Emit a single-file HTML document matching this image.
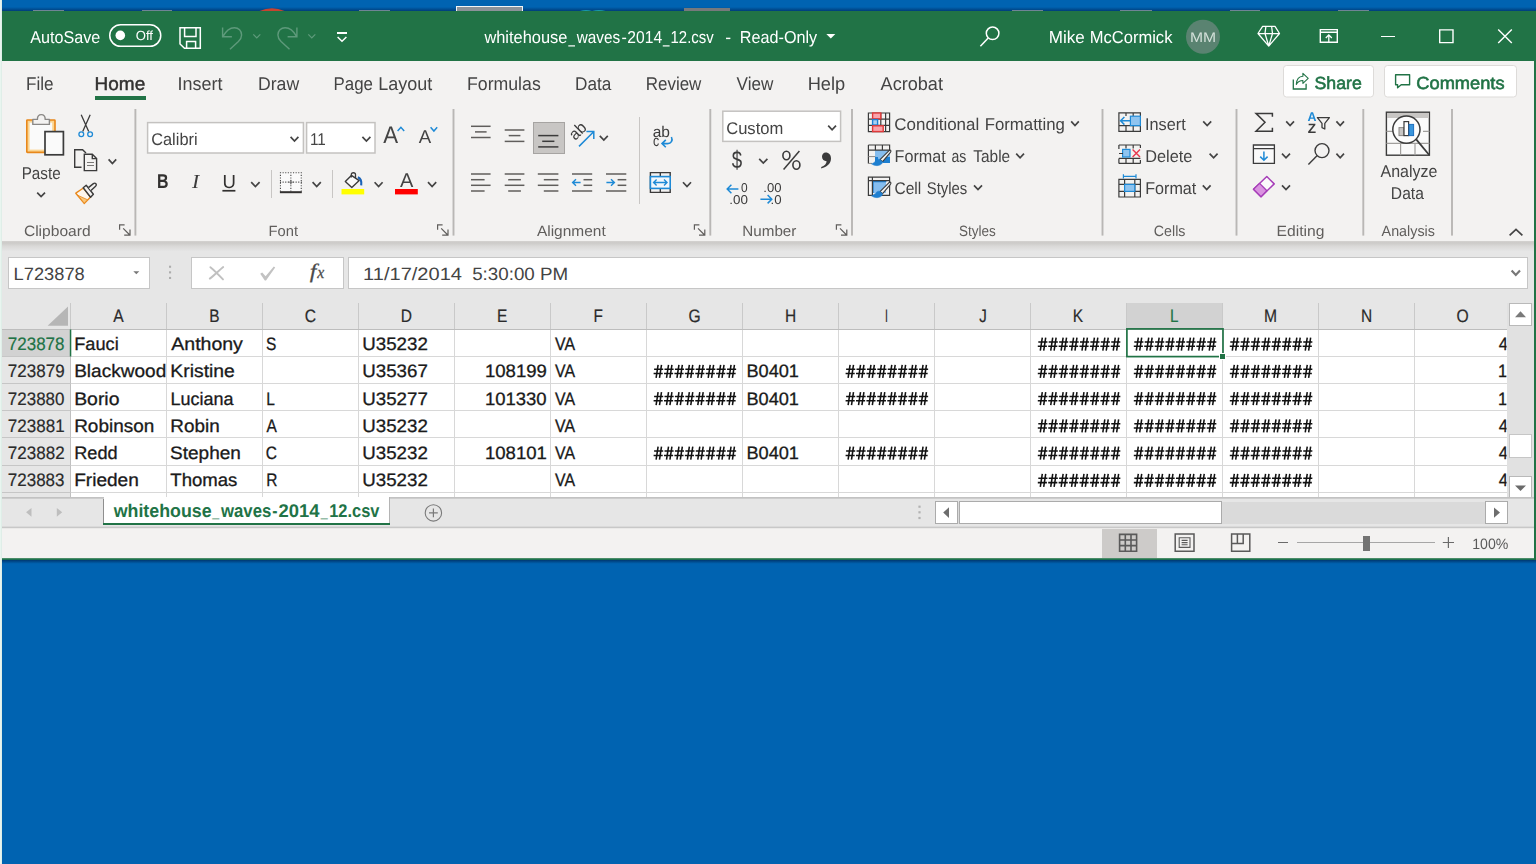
<!DOCTYPE html>
<html><head><meta charset="utf-8"><title>Excel</title>
<style>html,body{margin:0;padding:0;background:#0063b1;overflow:hidden}svg{display:block}text{white-space:pre}</style>
</head><body>
<svg width="1536" height="864" viewBox="0 0 1536 864" font-family="Liberation Sans" text-rendering="geometricPrecision">
<rect x="0" y="0" width="1536" height="864" fill="#0063b1" shape-rendering="crispEdges"/>
<defs><filter id="nf" filterUnits="userSpaceOnUse" x="0" y="0" width="1536" height="864"><feOffset dx="0" dy="0"/></filter><linearGradient id="shT" x1="0" y1="0" x2="0" y2="1"><stop offset="0" stop-color="#0063b1"/><stop offset="1" stop-color="#003d7a"/></linearGradient><linearGradient id="shB" x1="0" y1="0" x2="0" y2="1"><stop offset="0" stop-color="#00366e"/><stop offset="1" stop-color="#0063b1"/></linearGradient><linearGradient id="rsh" x1="0" y1="0" x2="0" y2="1"><stop offset="0" stop-color="#d4d2d0"/><stop offset="0.18" stop-color="#cccac8"/><stop offset="0.5" stop-color="#dad9d8"/><stop offset="1" stop-color="#e6e6e6"/></linearGradient></defs>
<rect x="2" y="7" width="1534" height="4" fill="url(#shT)" shape-rendering="crispEdges"/>
<rect x="2" y="559.8" width="1534" height="4" fill="url(#shB)" shape-rendering="crispEdges"/>
<rect x="32.5" y="10" width="31" height="1" fill="#6f8496" shape-rendering="crispEdges"/>
<rect x="141.5" y="10" width="30.5" height="1" fill="#6f8496" shape-rendering="crispEdges"/>
<rect x="359" y="10" width="31" height="1" fill="#6f8496" shape-rendering="crispEdges"/>
<rect x="1012" y="10" width="31" height="1" fill="#6f8496" shape-rendering="crispEdges"/>
<rect x="1120" y="10" width="31.5" height="1" fill="#6f8496" shape-rendering="crispEdges"/>
<rect x="1229.5" y="10" width="30.5" height="1" fill="#6f8496" shape-rendering="crispEdges"/>
<rect x="1338" y="10" width="31" height="1" fill="#6f8496" shape-rendering="crispEdges"/>
<path d="M259.5 11 Q272 5.6 284.5 11Z" stroke="none" fill="#c8432f" stroke-width="1"/>
<rect x="456" y="5.7" width="67" height="5.3" fill="#8b9299" shape-rendering="crispEdges"/>
<rect x="456" y="5.7" width="67" height="1" fill="#f2f4f6" shape-rendering="crispEdges"/>
<rect x="456" y="5.7" width="1" height="5.3" fill="#f2f4f6" shape-rendering="crispEdges"/>
<rect x="522" y="5.7" width="1" height="5.3" fill="#f2f4f6" shape-rendering="crispEdges"/>
<rect x="683.5" y="7.6" width="46" height="3.4" fill="#77797c" shape-rendering="crispEdges"/>
<path d="M580 11 Q586 9 592 11 Q599 9 605.5 11Z" stroke="none" fill="#1a9aa8" stroke-width="1"/>
<rect x="2" y="11" width="1533" height="548" fill="#f3f2f1" shape-rendering="crispEdges"/>
<rect x="2" y="11" width="1534" height="49.5" fill="#217346" shape-rendering="crispEdges"/>
<rect x="1534" y="11" width="2" height="549" fill="#217346" shape-rendering="crispEdges"/>
<rect x="2" y="558.2" width="1534" height="1.7" fill="#217346"/>
<rect x="2" y="241" width="1532" height="287" fill="#e6e6e6" shape-rendering="crispEdges"/>
<rect x="2" y="241" width="1532" height="10.5" fill="url(#rsh)" shape-rendering="crispEdges"/>
<rect x="2" y="528" width="1532" height="30" fill="#f3f2f1" shape-rendering="crispEdges"/>
<line x1="2" y1="527.5" x2="1534" y2="527.5" stroke="#c6c6c6" stroke-width="1" shape-rendering="crispEdges"/>
<rect x="0" y="0" width="1" height="864" fill="#e8f5ef" shape-rendering="crispEdges"/>
<rect x="1" y="0" width="1" height="864" fill="#dfeee8" shape-rendering="crispEdges"/>
<g filter="url(#nf)">
<text x="30.30" y="42.60" font-family="Liberation Sans" font-size="17.2" fill="#ffffff" textLength="70.07" lengthAdjust="spacingAndGlyphs">AutoSave</text>
<rect x="109.75" y="24.75" width="51" height="21.5" rx="10.75" fill="none" stroke="#fff" stroke-width="1.5"/>
<circle cx="120.3" cy="35.4" r="4.8" fill="#fff"/>
<text x="135.71" y="40.30" font-family="Liberation Sans" font-size="13.2" fill="#ffffff" textLength="17.23" lengthAdjust="spacingAndGlyphs">Off</text>
<path d="M180 27.7H200.3V48.3H184.5L180 44Z" stroke="#ffffff" fill="none" stroke-width="1.5"/>
<path d="M184.6 27.7V36.6H196V27.7" stroke="#ffffff" fill="none" stroke-width="1.5"/>
<path d="M186.6 48.3V41.6H195.6V48.3" stroke="#ffffff" fill="none" stroke-width="1.5"/>
<path d="M222.6 27.4V36.7H231.9 M223 36.4C226 30.8 230 27.7 234.4 27.7C238.6 27.7 241.6 31 241.6 35C241.6 38 240.4 39.6 238.4 41.6L230 49.3" stroke="#5e9a7b" fill="none" stroke-width="1.4"/>
<path d="M253.3 34.4L256.8 38L260.3 34.4" stroke="#5e9a7b" fill="none" stroke-width="1.2"/>
<path d="M296.9 27.4V36.7H287.6 M296.5 36.4C293.5 30.8 289.5 27.7 285.1 27.7C280.9 27.7 277.9 31 277.9 35C277.9 38 279.1 39.6 281.1 41.6L289.5 49.3" stroke="#5e9a7b" fill="none" stroke-width="1.4"/>
<path d="M308.3 34.4L311.8 38L315.3 34.4" stroke="#5e9a7b" fill="none" stroke-width="1.2"/>
<line x1="337" y1="33" x2="347" y2="33" stroke="#ffffff" stroke-width="1.5" shape-rendering="crispEdges"/>
<path d="M337.6 37L342.0 41.2L346.4 37" stroke="#ffffff" fill="none" stroke-width="1.5"/>
<text x="484.38" y="43.20" font-family="Liberation Sans" font-size="17.3" fill="#ffffff" textLength="82.96" lengthAdjust="spacingAndGlyphs">whitehouse</text>
<text x="568.53" y="43.20" font-family="Liberation Sans" font-size="17.3" fill="#ffffff" textLength="6.41" lengthAdjust="spacingAndGlyphs">_</text>
<text x="576.78" y="43.20" font-family="Liberation Sans" font-size="17.3" fill="#ffffff" textLength="43.45" lengthAdjust="spacingAndGlyphs">waves</text>
<text x="621.46" y="43.20" font-family="Liberation Sans" font-size="17.3" fill="#ffffff" textLength="5.33" lengthAdjust="spacingAndGlyphs">-</text>
<text x="627.32" y="43.20" font-family="Liberation Sans" font-size="17.3" fill="#ffffff" textLength="34.77" lengthAdjust="spacingAndGlyphs">2014</text>
<text x="662.93" y="43.20" font-family="Liberation Sans" font-size="17.3" fill="#ffffff" textLength="6.41" lengthAdjust="spacingAndGlyphs">_</text>
<text x="670.58" y="43.20" font-family="Liberation Sans" font-size="17.3" fill="#ffffff" textLength="43.12" lengthAdjust="spacingAndGlyphs">12.csv</text>
<text x="725.20" y="43.20" font-family="Liberation Sans" font-size="17.3" fill="#ffffff" textLength="5.86" lengthAdjust="spacingAndGlyphs">-</text>
<text x="739.80" y="43.20" font-family="Liberation Sans" font-size="17.3" fill="#ffffff" textLength="77.39" lengthAdjust="spacingAndGlyphs">Read-Only</text>
<path d="M826.3 34H835.3L830.8 38.6Z" stroke="none" fill="#ffffff" stroke-width="1"/>
<circle cx="992.6" cy="33.3" r="6.3" fill="none" stroke="#fff" stroke-width="1.5"/>
<line x1="988.2" y1="38" x2="980.4" y2="46.3" stroke="#ffffff" stroke-width="1.5"/>
<text x="1048.74" y="43.20" font-family="Liberation Sans" font-size="17.3" fill="#ffffff" textLength="35.97" lengthAdjust="spacingAndGlyphs">Mike</text>
<text x="1089.78" y="43.20" font-family="Liberation Sans" font-size="17.3" fill="#ffffff" textLength="82.63" lengthAdjust="spacingAndGlyphs">McCormick</text>
<circle cx="1203" cy="36.8" r="17" fill="#5a8371"/>
<text x="1189.94" y="42.30" font-family="Liberation Sans" font-size="14" fill="#d3e0d9" textLength="26.15" lengthAdjust="spacingAndGlyphs">MM</text>
<path d="M1262.6 26.4H1275L1279.5 33.5L1268.75 46.1L1258 33.5Z M1258 33.5H1279.5 M1265.9 26.4L1265 33.5L1268.75 46 M1271.6 26.4L1272.5 33.5L1268.75 46" stroke="#ffffff" fill="none" stroke-width="1.25" stroke-linejoin="round"/>
<path d="M1320.3 29.6H1337.3V42.3H1320.3Z M1320.3 32.2H1337.3" stroke="#ffffff" fill="none" stroke-width="1.4"/>
<path d="M1328.8 42V35 M1325.8 38L1328.8 34.9L1331.8 38" stroke="#ffffff" fill="none" stroke-width="1.3"/>
<line x1="1380.7" y1="36.5" x2="1395" y2="36.5" stroke="#ffffff" stroke-width="1.4" shape-rendering="crispEdges"/>
<path d="M1439.7 29.9H1453V42.6H1439.7Z" stroke="#ffffff" fill="none" stroke-width="1.4"/>
<path d="M1498.2 29.5L1511.8 43 M1511.8 29.5L1498.2 43" stroke="#ffffff" fill="none" stroke-width="1.4"/>
<text x="26.03" y="90.00" font-family="Liberation Sans" font-size="18.5" fill="#444444" textLength="27.58" lengthAdjust="spacingAndGlyphs">File</text>
<text x="94.58" y="90.00" font-family="Liberation Sans" font-size="18.5" fill="#323130" textLength="50.63" lengthAdjust="spacingAndGlyphs" stroke="#323130" stroke-width="0.45">Home</text>
<rect x="94.5" y="96" width="51.5" height="3.5" fill="#217346" shape-rendering="crispEdges"/>
<text x="177.48" y="90.00" font-family="Liberation Sans" font-size="18.5" fill="#444444" textLength="44.94" lengthAdjust="spacingAndGlyphs">Insert</text>
<text x="257.99" y="90.00" font-family="Liberation Sans" font-size="18.5" fill="#444444" textLength="41.19" lengthAdjust="spacingAndGlyphs">Draw</text>
<text x="333.55" y="90.00" font-family="Liberation Sans" font-size="18.5" fill="#444444" textLength="39.44" lengthAdjust="spacingAndGlyphs">Page</text>
<text x="378.16" y="90.00" font-family="Liberation Sans" font-size="18.5" fill="#444444" textLength="53.98" lengthAdjust="spacingAndGlyphs">Layout</text>
<text x="466.98" y="90.00" font-family="Liberation Sans" font-size="18.5" fill="#444444" textLength="73.79" lengthAdjust="spacingAndGlyphs">Formulas</text>
<text x="575.02" y="90.00" font-family="Liberation Sans" font-size="18.5" fill="#444444" textLength="36.33" lengthAdjust="spacingAndGlyphs">Data</text>
<text x="645.74" y="90.00" font-family="Liberation Sans" font-size="18.5" fill="#444444" textLength="55.64" lengthAdjust="spacingAndGlyphs">Review</text>
<text x="736.60" y="90.00" font-family="Liberation Sans" font-size="18.5" fill="#444444" textLength="36.79" lengthAdjust="spacingAndGlyphs">View</text>
<text x="807.64" y="90.00" font-family="Liberation Sans" font-size="18.5" fill="#444444" textLength="37.52" lengthAdjust="spacingAndGlyphs">Help</text>
<text x="880.60" y="90.00" font-family="Liberation Sans" font-size="18.5" fill="#444444" textLength="62.33" lengthAdjust="spacingAndGlyphs">Acrobat</text>
<rect x="1283.5" y="65.5" width="90" height="31.5" rx="3" fill="#fff" stroke="#dddbd9"/>
<rect x="1384.5" y="65.5" width="132" height="31.5" rx="3" fill="#fff" stroke="#dddbd9"/>
<path d="M1293.3 79.4V89H1306.1V83.8" stroke="#217346" fill="none" stroke-width="1.3"/>
<path d="M1296.3 84.4C1296.6 79.6 1299 76.5 1302.9 76.3V73.3L1308.2 78.3L1302.9 83.3V80.5C1300 80.5 1297.8 81.7 1296.3 84.4Z" stroke="#217346" fill="none" stroke-width="1.1" stroke-linejoin="round"/>
<text x="1314.50" y="89.00" font-family="Liberation Sans" font-size="17.5" fill="#217346" textLength="47.27" lengthAdjust="spacingAndGlyphs" stroke="#217346" stroke-width="0.6">Share</text>
<path d="M1395.6 74.8H1409.6V84.8H1401.2L1397.6 87.8V84.8H1395.6Z" stroke="#217346" fill="none" stroke-width="1.4" stroke-linejoin="round"/>
<text x="1416.39" y="89.00" font-family="Liberation Sans" font-size="17.5" fill="#217346" textLength="88.14" lengthAdjust="spacingAndGlyphs" stroke="#217346" stroke-width="0.6">Comments</text>
<rect x="134.45000000000002" y="109" width="1.9" height="126.6" fill="#b9b7b5"/>
<rect x="452.55" y="109" width="1.9" height="126.6" fill="#b9b7b5"/>
<rect x="709.3499999999999" y="109" width="1.9" height="126.6" fill="#b9b7b5"/>
<rect x="851.05" y="109" width="1.9" height="126.6" fill="#b9b7b5"/>
<rect x="1101.55" y="109" width="1.9" height="126.6" fill="#b9b7b5"/>
<rect x="1235.55" y="109" width="1.9" height="126.6" fill="#b9b7b5"/>
<rect x="1362.35" y="109" width="1.9" height="126.6" fill="#b9b7b5"/>
<rect x="1451.05" y="109" width="1.9" height="126.6" fill="#b9b7b5"/>
<rect x="26.8" y="120" width="28.2" height="32.4" rx="0.6" fill="#fbd591" stroke="#e8871a" stroke-width="1.6"/>
<rect x="29.6" y="122.6" width="22.6" height="27" fill="#fafafa"/>
<path d="M32.8 124.4V119.4H37.4C37.4 113 45.2 113 45.2 119.4H49.4V124.4Z" stroke="#8a8886" fill="#f3f2f1" stroke-width="1.4" stroke-linejoin="round"/>
<rect x="45" y="131.6" width="18.4" height="23.2" fill="#fafafa" stroke="#3b3b3b" stroke-width="1.7"/>
<text x="21.68" y="179.00" font-family="Liberation Sans" font-size="17" fill="#444444" textLength="39.07" lengthAdjust="spacingAndGlyphs">Paste</text>
<path d="M37.2 192.6L41.1 196.6L45 192.6" stroke="#444444" fill="none" stroke-width="1.7"/>
<path d="M81.2 114.8L88.7 131.5 M90.2 114.8L82.7 131.5" stroke="#3b3b3b" fill="none" stroke-width="1.3"/>
<circle cx="81.3" cy="134.2" r="2.4" fill="none" stroke="#1e8ad6" stroke-width="1.3"/><circle cx="90.1" cy="134.2" r="2.4" fill="none" stroke="#1e8ad6" stroke-width="1.3"/>
<path d="M81.5 167.3H74.7V149.7H82.6L86 153" stroke="#3b3b3b" fill="none" stroke-width="1.4"/>
<path d="M84.3 154.3H92.3L96.6 158.6V170.6H84.3Z M92.3 154.3V158.6H96.6" stroke="#3b3b3b" fill="#f3f2f1" stroke-width="1.4"/>
<line x1="87" y1="162.5" x2="94" y2="162.5" stroke="#797775" stroke-width="1" shape-rendering="crispEdges"/>
<line x1="87" y1="165.5" x2="94" y2="165.5" stroke="#797775" stroke-width="1" shape-rendering="crispEdges"/>
<path d="M108.6 159.4L112.4 163.6L116.2 159.4" stroke="#444444" fill="none" stroke-width="1.7"/>
<path d="M75.8 193.2L83.4 188L90.6 197L84.2 203.4Z" stroke="#e8871a" fill="#fdf6ec" stroke-width="1.4" stroke-linejoin="round"/>
<path d="M78 195.4L87.6 199.8L84.2 203.2Z" stroke="#e8871a" fill="#f9c77a" stroke-width="0.8" stroke-linejoin="round"/>
<path d="M83.2 187.8L86.2 185.2L93.4 194.2L90.6 197.2Z" stroke="#3b3b3b" fill="#f3f2f1" stroke-width="1.4" stroke-linejoin="round"/>
<path d="M88.4 187.6L93.4 183.6C95.4 182.2 97.4 184.6 95.6 186.2L91 190.6" stroke="#3b3b3b" fill="#f3f2f1" stroke-width="1.4" stroke-linejoin="round"/>
<text x="23.92" y="236.20" font-family="Liberation Sans" font-size="14.9" fill="#605e5c" textLength="66.72" lengthAdjust="spacingAndGlyphs">Clipboard</text>
<path d="M119.6 229.8V224.8H124.6" stroke="#605e5c" fill="none" stroke-width="1.2"/>
<path d="M123.19999999999999 228.4L129.79999999999998 235.0 M130.0 229.4V235.20000000000002H124.19999999999999" stroke="#605e5c" fill="none" stroke-width="1.2"/>
<rect x="147.6" y="122.6" width="155.8" height="30.4" fill="#fff" stroke="#c4c2c0" stroke-width="1.5"/>
<text x="151.18" y="144.70" font-family="Liberation Sans" font-size="17" fill="#444444" textLength="46.45" lengthAdjust="spacingAndGlyphs">Calibri</text>
<path d="M290.6 136.8L294.5 141L298.4 136.8" stroke="#444444" fill="none" stroke-width="1.7"/>
<rect x="306.6" y="122.6" width="68.4" height="30.4" fill="#fff" stroke="#c4c2c0" stroke-width="1.5"/>
<text x="309.95" y="144.70" font-family="Liberation Sans" font-size="17" fill="#444444" textLength="15.88" lengthAdjust="spacingAndGlyphs">11</text>
<path d="M362.4 136.8L366.4 141L370.4 136.8" stroke="#444444" fill="none" stroke-width="1.7"/>
<text x="383.20" y="143.40" font-family="Liberation Sans" font-size="24" fill="#444444" textLength="14.85" lengthAdjust="spacingAndGlyphs">A</text>
<path d="M397.6 131L400.9 127.3L404.2 131" stroke="#1e8ad6" fill="none" stroke-width="1.5"/>
<text x="418.80" y="143.40" font-family="Liberation Sans" font-size="18.6" fill="#444444" textLength="12.44" lengthAdjust="spacingAndGlyphs">A</text>
<path d="M430.6 127.3L433.9 131L437.2 127.3" stroke="#1e8ad6" fill="none" stroke-width="1.5"/>
<text x="157.06" y="188.40" font-family="Liberation Sans" font-size="20" fill="#323130" textLength="11.51" lengthAdjust="spacingAndGlyphs" font-weight="bold">B</text>
<text x="192.01" y="188.40" font-family="Liberation Serif" font-size="20" fill="#3b3b3b" textLength="7.19" lengthAdjust="spacingAndGlyphs" font-style="italic">I</text>
<text x="222.51" y="188.20" font-family="Liberation Sans" font-size="19" fill="#323130" textLength="13.43" lengthAdjust="spacingAndGlyphs">U</text>
<rect x="222.4" y="189.9" width="13" height="1.7" fill="#323130"/>
<path d="M251.2 182.2L255.4 186.6L259.6 182.2" stroke="#444444" fill="none" stroke-width="1.7"/>
<rect x="270.75" y="170" width="1" height="27.5" fill="#c8c6c4" shape-rendering="crispEdges"/>
<rect x="332.25" y="170" width="1" height="27.5" fill="#c8c6c4" shape-rendering="crispEdges"/>
<rect x="280.4" y="172.8" width="20.8" height="18.6" fill="#fafafa"/>
<path d="M280.00 172.2h1.1v1.1h-1.1zM280.00 181.6h1.1v1.1h-1.1zM279.9 172.20h1.1v1.1h-1.1zM290.3 172.20h1.1v1.1h-1.1zM300.7 172.20h1.1v1.1h-1.1zM282.60 172.2h1.1v1.1h-1.1zM282.60 181.6h1.1v1.1h-1.1zM279.9 174.80h1.1v1.1h-1.1zM290.3 174.80h1.1v1.1h-1.1zM300.7 174.80h1.1v1.1h-1.1zM285.20 172.2h1.1v1.1h-1.1zM285.20 181.6h1.1v1.1h-1.1zM279.9 177.40h1.1v1.1h-1.1zM290.3 177.40h1.1v1.1h-1.1zM300.7 177.40h1.1v1.1h-1.1zM287.80 172.2h1.1v1.1h-1.1zM287.80 181.6h1.1v1.1h-1.1zM279.9 180.00h1.1v1.1h-1.1zM290.3 180.00h1.1v1.1h-1.1zM300.7 180.00h1.1v1.1h-1.1zM290.40 172.2h1.1v1.1h-1.1zM290.40 181.6h1.1v1.1h-1.1zM279.9 182.60h1.1v1.1h-1.1zM290.3 182.60h1.1v1.1h-1.1zM300.7 182.60h1.1v1.1h-1.1zM293.00 172.2h1.1v1.1h-1.1zM293.00 181.6h1.1v1.1h-1.1zM279.9 185.20h1.1v1.1h-1.1zM290.3 185.20h1.1v1.1h-1.1zM300.7 185.20h1.1v1.1h-1.1zM295.60 172.2h1.1v1.1h-1.1zM295.60 181.6h1.1v1.1h-1.1zM279.9 187.80h1.1v1.1h-1.1zM290.3 187.80h1.1v1.1h-1.1zM300.7 187.80h1.1v1.1h-1.1zM298.20 172.2h1.1v1.1h-1.1zM298.20 181.6h1.1v1.1h-1.1zM279.9 190.40h1.1v1.1h-1.1zM290.3 190.40h1.1v1.1h-1.1zM300.7 190.40h1.1v1.1h-1.1zM300.80 172.2h1.1v1.1h-1.1zM300.80 181.6h1.1v1.1h-1.1z" stroke="none" fill="#4a4a4a" stroke-width="1"/>
<path d="M288.4 182.15H293.2 M290.85 179.8V184.6" stroke="#6a6a6a" fill="none" stroke-width="0.9"/>
<rect x="279.9" y="191.2" width="21.9" height="2" fill="#323130"/>
<path d="M312.6 182.2L316.70000000000005 186.6L320.8 182.2" stroke="#444444" fill="none" stroke-width="1.7"/>
<path d="M351.4 175.4L359.2 180.6L351.8 187.4L345.3 181.6Z" stroke="#3b3b3b" fill="#fafafa" stroke-width="1.4" stroke-linejoin="round"/>
<path d="M351.3 177.6V174.6C351.3 172.1 355.5 172.1 355.5 174.6V178" stroke="#3b3b3b" fill="none" stroke-width="1.3"/>
<path d="M357.9 177.3C360.7 178.4 361.7 181.4 361.2 185.3" stroke="#1a63b8" fill="none" stroke-width="2.1"/>
<rect x="341.5" y="189" width="22.7" height="5.4" fill="#ffff00"/>
<path d="M374.6 182.2L378.6 186.6L382.6 182.2" stroke="#444444" fill="none" stroke-width="1.7"/>
<text x="400.10" y="187.20" font-family="Liberation Sans" font-size="20" fill="#444444" textLength="13.34" lengthAdjust="spacingAndGlyphs">A</text>
<rect x="395" y="189" width="22.8" height="5.4" fill="#ff0000"/>
<path d="M428 182.2L432.1 186.6L436.2 182.2" stroke="#444444" fill="none" stroke-width="1.7"/>
<text x="268.62" y="236.20" font-family="Liberation Sans" font-size="14.9" fill="#605e5c" textLength="29.49" lengthAdjust="spacingAndGlyphs">Font</text>
<path d="M437.6 229.8V224.8H442.6" stroke="#605e5c" fill="none" stroke-width="1.2"/>
<path d="M441.20000000000005 228.4L447.8 235.0 M448.0 229.4V235.20000000000002H442.20000000000005" stroke="#605e5c" fill="none" stroke-width="1.2"/>
<line x1="471" y1="126.3" x2="490.6" y2="126.3" stroke="#605e5c" stroke-width="1.5"/>
<line x1="475" y1="131.9" x2="486.6" y2="131.9" stroke="#605e5c" stroke-width="1.5"/>
<line x1="471" y1="137.5" x2="490.6" y2="137.5" stroke="#605e5c" stroke-width="1.5"/>
<line x1="504.7" y1="130" x2="524.4" y2="130" stroke="#605e5c" stroke-width="1.5"/>
<line x1="508.7" y1="135.6" x2="520.4" y2="135.6" stroke="#605e5c" stroke-width="1.5"/>
<line x1="504.7" y1="141.4" x2="524.4" y2="141.4" stroke="#605e5c" stroke-width="1.5"/>
<rect x="533" y="122" width="31.4" height="31.2" fill="#c8c6c4" stroke="#a6a4a2" stroke-width="1" shape-rendering="crispEdges"/>
<line x1="538.2" y1="135.6" x2="558.4" y2="135.6" stroke="#3b3b3b" stroke-width="1.5"/>
<line x1="542.2" y1="141.3" x2="554.4" y2="141.3" stroke="#3b3b3b" stroke-width="1.5"/>
<line x1="538.2" y1="146.9" x2="558.4" y2="146.9" stroke="#3b3b3b" stroke-width="1.5"/>
<g transform="translate(575.2,141) rotate(-45)"><text x="0" y="0" font-size="16.5" fill="#3b3b3b" textLength="17.5" lengthAdjust="spacingAndGlyphs">ab</text></g>
<path d="M579 146.4L593.4 132 M586.4 131.6H593.8V139" stroke="#1e8ad6" fill="none" stroke-width="1.5"/>
<path d="M599.8 135.8L603.8 140L607.8 135.8" stroke="#444444" fill="none" stroke-width="1.7"/>
<rect x="638.9" y="117" width="1" height="86.5" fill="#c8c6c4" shape-rendering="crispEdges"/>
<text x="652.68" y="136.50" font-family="Liberation Sans" font-size="15.5" fill="#3b3b3b" textLength="17.28" lengthAdjust="spacingAndGlyphs">ab</text>
<text x="653.00" y="145.80" font-family="Liberation Sans" font-size="15.5" fill="#3b3b3b" textLength="6.21" lengthAdjust="spacingAndGlyphs">c</text>
<path d="M671.4 137C673.2 140.6 671 143.6 667.6 143.6H662.2 M665.8 139.9L662 143.6L665.8 147.3" stroke="#1e8ad6" fill="none" stroke-width="1.6"/>
<line x1="471" y1="174" x2="490.6" y2="174" stroke="#605e5c" stroke-width="1.5"/>
<line x1="504.7" y1="174" x2="524.4" y2="174" stroke="#605e5c" stroke-width="1.5"/>
<line x1="537.8" y1="174" x2="558.4" y2="174" stroke="#605e5c" stroke-width="1.5"/>
<line x1="471" y1="179.7" x2="484.6" y2="179.7" stroke="#605e5c" stroke-width="1.5"/>
<line x1="508.2" y1="179.7" x2="520.9" y2="179.7" stroke="#605e5c" stroke-width="1.5"/>
<line x1="543.8" y1="179.7" x2="558.4" y2="179.7" stroke="#605e5c" stroke-width="1.5"/>
<line x1="471" y1="185.3" x2="490.6" y2="185.3" stroke="#605e5c" stroke-width="1.5"/>
<line x1="504.7" y1="185.3" x2="524.4" y2="185.3" stroke="#605e5c" stroke-width="1.5"/>
<line x1="537.8" y1="185.3" x2="558.4" y2="185.3" stroke="#605e5c" stroke-width="1.5"/>
<line x1="471" y1="191" x2="484.6" y2="191" stroke="#605e5c" stroke-width="1.5"/>
<line x1="508.2" y1="191" x2="520.9" y2="191" stroke="#605e5c" stroke-width="1.5"/>
<line x1="543.8" y1="191" x2="558.4" y2="191" stroke="#605e5c" stroke-width="1.5"/>
<line x1="572" y1="174" x2="592.2" y2="174" stroke="#605e5c" stroke-width="1.5"/>
<line x1="583.5" y1="179.7" x2="592.2" y2="179.7" stroke="#605e5c" stroke-width="1.5"/>
<line x1="583.5" y1="185.3" x2="592.2" y2="185.3" stroke="#605e5c" stroke-width="1.5"/>
<line x1="572" y1="191" x2="592.2" y2="191" stroke="#605e5c" stroke-width="1.5"/>
<path d="M580.6 182.5H572.6 M576 179.2L572.6 182.5L576 185.8" stroke="#1e8ad6" fill="none" stroke-width="1.4"/>
<line x1="606" y1="174" x2="626.3" y2="174" stroke="#605e5c" stroke-width="1.5"/>
<line x1="617.6" y1="179.7" x2="626.3" y2="179.7" stroke="#605e5c" stroke-width="1.5"/>
<line x1="617.6" y1="185.3" x2="626.3" y2="185.3" stroke="#605e5c" stroke-width="1.5"/>
<line x1="606" y1="191" x2="626.3" y2="191" stroke="#605e5c" stroke-width="1.5"/>
<path d="M606.4 182.5H614.4 M611 179.2L614.4 182.5L611 185.8" stroke="#1e8ad6" fill="none" stroke-width="1.4"/>
<path d="M650.4 172.6H670.2V192.4H650.4Z M660.3 172.6V176.6 M660.3 188.4V192.4" stroke="#3b3b3b" fill="none" stroke-width="1.4"/>
<rect x="650.4" y="176.6" width="19.8" height="11.8" fill="#f2f7fc" stroke="#1e8ad6" stroke-width="1.6"/>
<path d="M653.6 182.5H667 M656.6 179.6L653.6 182.5L656.6 185.4 M664 179.6L667 182.5L664 185.4" stroke="#1e8ad6" fill="none" stroke-width="1.4"/>
<path d="M683 182.2L687.0 186.6L691 182.2" stroke="#444444" fill="none" stroke-width="1.7"/>
<text x="536.90" y="236.20" font-family="Liberation Sans" font-size="14.9" fill="#605e5c" textLength="68.83" lengthAdjust="spacingAndGlyphs">Alignment</text>
<path d="M694.4 229.8V224.8H699.4" stroke="#605e5c" fill="none" stroke-width="1.2"/>
<path d="M698.0 228.4L704.6 235.0 M704.8 229.4V235.20000000000002H699.0" stroke="#605e5c" fill="none" stroke-width="1.2"/>
<rect x="722.8" y="111.2" width="117.8" height="30.2" fill="#fff" stroke="#c4c2c0" stroke-width="1.5"/>
<text x="726.17" y="134.00" font-family="Liberation Sans" font-size="17" fill="#444444" textLength="57.11" lengthAdjust="spacingAndGlyphs">Custom</text>
<path d="M828.2 125.6L832.1 129.8L836 125.6" stroke="#444444" fill="none" stroke-width="1.7"/>
<text x="731.71" y="168.40" font-family="Liberation Sans" font-size="24.5" fill="#3b3b3b" textLength="10.40" lengthAdjust="spacingAndGlyphs">$</text>
<path d="M759.2 158.8L763.3 163L767.4 158.8" stroke="#444444" fill="none" stroke-width="1.7"/>
<ellipse cx="786.4" cy="155.5" rx="3.5" ry="4.2" fill="none" stroke="#3b3b3b" stroke-width="1.6"/><ellipse cx="796.4" cy="165" rx="3.5" ry="4.2" fill="none" stroke="#3b3b3b" stroke-width="1.6"/>
<line x1="799.4" y1="150.9" x2="783.6" y2="169.6" stroke="#3b3b3b" stroke-width="1.5"/>
<path d="M825.6 152.6C829 152.6 831 155 831 158.6C831 163.6 827 167.2 821.2 168.4V167C824.4 165.8 826.6 163.8 826.6 161.2C824 161.2 822 159.4 822 156.8C822 154.4 823.6 152.6 825.6 152.6Z" stroke="none" fill="#3b3b3b" stroke-width="1"/>
<path d="M738.4 189H727.2 M731.4 184.8L727.2 189L731.4 193.2" stroke="#1e8ad6" fill="none" stroke-width="1.5"/>
<text x="741.08" y="192.30" font-family="Liberation Sans" font-size="12.8" fill="#3b3b3b" textLength="6.65" lengthAdjust="spacingAndGlyphs">0</text>
<text x="729.29" y="204.00" font-family="Liberation Sans" font-size="12.8" fill="#3b3b3b" textLength="18.68" lengthAdjust="spacingAndGlyphs">.00</text>
<text x="763.32" y="192.30" font-family="Liberation Sans" font-size="12.8" fill="#3b3b3b" textLength="18.24" lengthAdjust="spacingAndGlyphs">.00</text>
<path d="M760.4 199.2H771.8 M767.6 195L771.8 199.2L767.6 203.4" stroke="#1e8ad6" fill="none" stroke-width="1.5"/>
<text x="770.51" y="204.00" font-family="Liberation Sans" font-size="12.8" fill="#3b3b3b" textLength="11.04" lengthAdjust="spacingAndGlyphs">.0</text>
<text x="742.28" y="236.20" font-family="Liberation Sans" font-size="14.9" fill="#605e5c" textLength="54.10" lengthAdjust="spacingAndGlyphs">Number</text>
<path d="M836.4 229.8V224.8H841.4" stroke="#605e5c" fill="none" stroke-width="1.2"/>
<path d="M840.0 228.4L846.6 235.0 M846.8 229.4V235.20000000000002H841.0" stroke="#605e5c" fill="none" stroke-width="1.2"/>
<path d="M868.4 113H889.6V131.6H868.4Z M868.4 119.2H889.6 M868.4 125.4H889.6 M872.6 113V131.6 M880.8 113V131.6 M885.6 113V131.6" stroke="#3b3b3b" fill="none" stroke-width="1.2"/>
<rect x="872.6" y="113" width="8.2" height="5.8" fill="#f9a3ab" stroke="#e03a3a" stroke-width="1.4"/>
<rect x="872.6" y="119.6" width="5" height="5.4" fill="#a8d0f2" stroke="#1e7fd0" stroke-width="1.4"/>
<rect x="872.6" y="125.8" width="10.6" height="5.8" fill="#f9a3ab" stroke="#e03a3a" stroke-width="1.4"/>
<text x="894.35" y="130.40" font-family="Liberation Sans" font-size="17" fill="#444444" textLength="84.93" lengthAdjust="spacingAndGlyphs">Conditional</text>
<text x="984.66" y="130.40" font-family="Liberation Sans" font-size="17" fill="#444444" textLength="80.24" lengthAdjust="spacingAndGlyphs">Formatting</text>
<path d="M1071.2 121.4L1075.0 125.6L1078.8 121.4" stroke="#444444" fill="none" stroke-width="1.7"/>
<rect x="875.4" y="150" width="14.2" height="13.4" fill="#86bdee" shape-rendering="crispEdges"/>
<rect x="883" y="157" width="6.6" height="6.4" fill="#1e7fd0" shape-rendering="crispEdges"/>
<rect x="875.4" y="157" width="3" height="6.4" fill="#1e7fd0" shape-rendering="crispEdges"/>
<path d="M868.4 145H889.6V150.2 M868.4 145V163.4 M868.4 150.2H889.6 M875.4 145V150.2 M882.4 145V150.2" stroke="#3b3b3b" fill="none" stroke-width="1.2"/>
<path d="M868.4 156.6H875.4 M868.4 163.4H872" stroke="#8a8886" fill="none" stroke-width="1"/>
<path d="M888.8000000000001 150.8C890.6 149.4 891.6 150.8 890.4000000000001 152.4L882.6 161.6L880.0 159.6Z" stroke="#3b3b3b" fill="#f3f2f1" stroke-width="1.1" stroke-linejoin="round"/>
<path d="M879.8000000000001 159.4C876.6 158.0 875.8000000000001 162.8 871.4000000000001 163.8C875.8000000000001 167.0 882.2 165.8 882.6 161.8Z" stroke="#1e7fd0" fill="#1e7fd0" stroke-width="0.5"/>
<text x="894.51" y="162.30" font-family="Liberation Sans" font-size="17" fill="#444444" textLength="51.23" lengthAdjust="spacingAndGlyphs">Format</text>
<text x="951.54" y="162.30" font-family="Liberation Sans" font-size="17" fill="#444444" textLength="14.87" lengthAdjust="spacingAndGlyphs">as</text>
<text x="973.29" y="162.30" font-family="Liberation Sans" font-size="17" fill="#444444" textLength="36.84" lengthAdjust="spacingAndGlyphs">Table</text>
<path d="M1016.2 153.6L1020.1 157.8L1024 153.6" stroke="#444444" fill="none" stroke-width="1.7"/>
<rect x="873" y="181.6" width="13.4" height="11.4" fill="#86bdee" shape-rendering="crispEdges"/>
<path d="M873 193V181.6H886.4" stroke="#1e7fd0" fill="none" stroke-width="1.3"/>
<path d="M868.4 177.2H889.6V195.4H868.4Z M868.4 180.6H889.6 M872.4 177.2V195.4" stroke="#3b3b3b" fill="none" stroke-width="1.2"/>
<path d="M888.8000000000001 182.8C890.6 181.4 891.6 182.8 890.4000000000001 184.4L882.6 193.6L880.0 191.6Z" stroke="#3b3b3b" fill="#f3f2f1" stroke-width="1.1" stroke-linejoin="round"/>
<path d="M879.8000000000001 191.4C876.6 190.0 875.8000000000001 194.8 871.4000000000001 195.8C875.8000000000001 199.0 882.2 197.8 882.6 193.8Z" stroke="#1e7fd0" fill="#1e7fd0" stroke-width="0.5"/>
<text x="894.42" y="194.00" font-family="Liberation Sans" font-size="17" fill="#444444" textLength="26.86" lengthAdjust="spacingAndGlyphs">Cell</text>
<text x="926.73" y="194.00" font-family="Liberation Sans" font-size="17" fill="#444444" textLength="40.56" lengthAdjust="spacingAndGlyphs">Styles</text>
<path d="M974 185.4L978.0 189.6L982 185.4" stroke="#444444" fill="none" stroke-width="1.7"/>
<text x="958.89" y="236.20" font-family="Liberation Sans" font-size="14.9" fill="#605e5c" textLength="36.86" lengthAdjust="spacingAndGlyphs">Styles</text>
<path d="M1118.9 112.8H1140.4V131.4H1118.9Z M1118.9 125.6H1140.4 M1126 125.6V131.4 M1133.2 125.6V131.4 M1126 112.8V116 M1133.2 112.8V116" stroke="#3b3b3b" fill="none" stroke-width="1.2"/>
<rect x="1130.4" y="116.2" width="10" height="9.4" fill="#8fc4f0" stroke="#1e8ad6" stroke-width="1.2"/>
<path d="M1130 120.8H1120.6 M1124.4 117L1120.6 120.8L1124.4 124.6" stroke="#1e8ad6" fill="none" stroke-width="1.5"/>
<text x="1145.04" y="130.40" font-family="Liberation Sans" font-size="17" fill="#444444" textLength="40.68" lengthAdjust="spacingAndGlyphs">Insert</text>
<path d="M1203.2 121.4L1207.2 125.6L1211.2 121.4" stroke="#444444" fill="none" stroke-width="1.7"/>
<path d="M1118.9 145H1140.4 M1118.9 163.4H1140.4 M1118.9 145V149 M1118.9 158.6V163.4 M1140.4 145V148 M1140.4 160V163.4 M1118.9 158.4H1140.4 M1126 158.4V163.4 M1133.2 158.4V163.4 M1126 145V148.6 M1133.2 145V148.6" stroke="#3b3b3b" fill="none" stroke-width="1.2"/>
<rect x="1122.6" y="149.4" width="7.4" height="7.6" fill="#8fc4f0" stroke="#1e8ad6" stroke-width="1.2"/>
<line x1="1118.9" y1="153.2" x2="1122.6" y2="153.2" stroke="#3b3b3b" stroke-width="1.2" shape-rendering="crispEdges"/>
<path d="M1132.6 149.6L1140 157 M1140 149.6L1132.6 157" stroke="#e8384f" fill="none" stroke-width="1.4"/>
<text x="1145.19" y="162.30" font-family="Liberation Sans" font-size="17" fill="#444444" textLength="47.17" lengthAdjust="spacingAndGlyphs">Delete</text>
<path d="M1209.6 153.6L1213.6 157.8L1217.6 153.6" stroke="#444444" fill="none" stroke-width="1.7"/>
<path d="M1118.9 179.4H1140.4V197H1118.9Z M1118.9 184.4H1140.4 M1118.9 191.4H1140.4 M1124.6 179.4V197 M1134.8 179.4V197" stroke="#3b3b3b" fill="none" stroke-width="1.2"/>
<rect x="1124.6" y="184.4" width="10.2" height="7" fill="#8fc4f0" stroke="#1e8ad6" stroke-width="1.2"/>
<path d="M1123.4 176.4H1136 M1123.4 174.2V178.6 M1136 174.2V178.6" stroke="#1e8ad6" fill="none" stroke-width="1.2"/>
<text x="1145.21" y="193.80" font-family="Liberation Sans" font-size="17" fill="#444444" textLength="51.13" lengthAdjust="spacingAndGlyphs">Format</text>
<path d="M1202.8 185.4L1206.6999999999998 189.6L1210.6 185.4" stroke="#444444" fill="none" stroke-width="1.7"/>
<text x="1153.79" y="236.20" font-family="Liberation Sans" font-size="14.9" fill="#605e5c" textLength="31.68" lengthAdjust="spacingAndGlyphs">Cells</text>
<path d="M1272.4 116.8V113.4H1256L1265 122.3L1256 131.2H1272.4V127.8" stroke="#3b3b3b" fill="none" stroke-width="1.5" stroke-linejoin="miter"/>
<path d="M1286.2 121.4L1290.1 125.6L1294 121.4" stroke="#444444" fill="none" stroke-width="1.7"/>
<path d="M1253.4 145H1274.4V163.4H1253.4Z M1253.4 148.6H1274.4" stroke="#3b3b3b" fill="#fafafa" stroke-width="1.3"/>
<path d="M1263.9 151.6V160 M1260.2 156.6L1263.9 160.2L1267.6 156.6" stroke="#1e8ad6" fill="none" stroke-width="1.5"/>
<path d="M1282 153.6L1286.0 157.8L1290 153.6" stroke="#444444" fill="none" stroke-width="1.7"/>
<path d="M1266.8 176.5L1274.2 183.9L1261 196.8L1253.5 189.2Z" stroke="#a63db8" fill="#fafafa" stroke-width="1.5" stroke-linejoin="round"/>
<path d="M1259.6 183.4L1266.9 190.8L1261 196.8L1253.5 189.2Z" stroke="#a63db8" fill="#d993e0" stroke-width="1.3" stroke-linejoin="round"/>
<path d="M1282 185.4L1286.0 189.6L1290 185.4" stroke="#444444" fill="none" stroke-width="1.7"/>
<text x="1307.59" y="120.60" font-family="Liberation Sans" font-size="12.6" fill="#1e8ad6" textLength="8.99" lengthAdjust="spacingAndGlyphs" font-weight="bold">A</text>
<text x="1307.76" y="133.40" font-family="Liberation Sans" font-size="13.6" fill="#3b3b3b" textLength="8.29" lengthAdjust="spacingAndGlyphs" font-weight="bold">Z</text>
<path d="M1317.4 117.6H1329.4L1324.8 123.4V129L1322 127.6V123.4Z" stroke="#3b3b3b" fill="none" stroke-width="1.3" stroke-linejoin="round"/>
<path d="M1336.4 121.4L1340.2 125.6L1344 121.4" stroke="#444444" fill="none" stroke-width="1.7"/>
<circle cx="1322" cy="150.6" r="7" fill="none" stroke="#3b3b3b" stroke-width="1.4"/>
<line x1="1317" y1="155.8" x2="1308.4" y2="164.6" stroke="#3b3b3b" stroke-width="1.4"/>
<path d="M1336.4 153.6L1340.2 157.8L1344 153.6" stroke="#444444" fill="none" stroke-width="1.7"/>
<text x="1276.55" y="236.20" font-family="Liberation Sans" font-size="14.9" fill="#605e5c" textLength="47.83" lengthAdjust="spacingAndGlyphs">Editing</text>
<rect x="1386.4" y="112.2" width="43" height="43" fill="#fafafa" stroke="#3b3b3b" stroke-width="1.4"/>
<rect x="1387.2" y="113" width="41.4" height="4.6" fill="#c8c6c4" shape-rendering="crispEdges"/>
<path d="M1386.4 131.4H1394 M1423 131.4H1429.4 M1386.4 143.4H1429.4 M1400.6 143.4V155.2 M1415 143.4V155.2" stroke="#a19f9d" fill="none" stroke-width="1.2"/>
<circle cx="1406.4" cy="129.6" r="13.6" fill="#fdfdfd" stroke="#3b3b3b" stroke-width="1.5"/>
<rect x="1399" y="127.6" width="5" height="8" fill="#c8c6c4" stroke="#8a8886" stroke-width="1"/>
<rect x="1404" y="121.6" width="4.6" height="14" fill="#fff" stroke="#3b3b3b" stroke-width="1.2"/>
<rect x="1409" y="124.4" width="4.6" height="11.2" fill="#3a96dd" stroke="#1e6fc0" stroke-width="1"/>
<line x1="1416.2" y1="139.4" x2="1429.2" y2="155" stroke="#3b3b3b" stroke-width="1.8"/>
<text x="1380.50" y="177.40" font-family="Liberation Sans" font-size="17" fill="#444444" textLength="56.88" lengthAdjust="spacingAndGlyphs">Analyze</text>
<text x="1390.85" y="198.70" font-family="Liberation Sans" font-size="17" fill="#444444" textLength="33.01" lengthAdjust="spacingAndGlyphs">Data</text>
<text x="1381.60" y="236.20" font-family="Liberation Sans" font-size="14.9" fill="#605e5c" textLength="53.28" lengthAdjust="spacingAndGlyphs">Analysis</text>
<path d="M1509.6 235.4L1516.0 229.4L1522.4 235.4" stroke="#444444" fill="none" stroke-width="1.7"/>
</g>
<rect x="8.5" y="257.5" width="141" height="30.5" fill="#fff" stroke="#c6c6c6" stroke-width="1" shape-rendering="crispEdges"/>
<text x="13.64" y="279.80" font-family="Liberation Sans" font-size="17.8" fill="#444" textLength="71.15" lengthAdjust="spacingAndGlyphs">L723878</text>
<path d="M133.3 271.3H139.3L136.3 274.2Z" stroke="none" fill="#777" stroke-width="1"/>
<rect x="169" y="265.7" width="2.1" height="2.1" fill="#adadad"/>
<rect x="169" y="271.3" width="2.1" height="2.1" fill="#adadad"/>
<rect x="169" y="276.9" width="2.1" height="2.1" fill="#adadad"/>
<rect x="191.5" y="257.5" width="152" height="30.5" fill="#fff" stroke="#c6c6c6" stroke-width="1" shape-rendering="crispEdges"/>
<path d="M209.8 278.6C213.5 276 219 270.5 223.2 267 M210.4 267.2C214.6 270.6 219.4 275.6 223 279.4" stroke="#c0c0c0" fill="none" stroke-width="1.9" stroke-linecap="round"/>
<path d="M260.2 273.8L262.2 272.4L265.6 276.2L273.8 266.6L275.2 267.4L266 280.4H264.8Z" stroke="none" fill="#c2c2c2" stroke-width="1"/>
<text x="309.86" y="278.40" font-family="Liberation Serif" font-size="20.5" fill="#4a4a4a" textLength="6.64" lengthAdjust="spacingAndGlyphs" font-style="italic" stroke="#4a4a4a" stroke-width="0.25">f</text>
<text x="317.34" y="278.40" font-family="Liberation Serif" font-size="17.5" fill="#4a4a4a" textLength="7.02" lengthAdjust="spacingAndGlyphs" font-style="italic" stroke="#4a4a4a" stroke-width="0.25">x</text>
<rect x="348.5" y="257.5" width="1179" height="30.5" fill="#fff" stroke="#c6c6c6" stroke-width="1" shape-rendering="crispEdges"/>
<text x="363.10" y="279.80" font-family="Liberation Sans" font-size="17.8" fill="#444" textLength="98.92" lengthAdjust="spacingAndGlyphs">11/17/2014</text>
<text x="472.15" y="279.80" font-family="Liberation Sans" font-size="17.8" fill="#444" textLength="96.04" lengthAdjust="spacingAndGlyphs">5:30:00 PM</text>
<path d="M1511.6 270.6L1515.8 275L1520 270.6" stroke="#777" fill="none" stroke-width="2.2"/>
<rect x="2" y="302.5" width="1505" height="26.5" fill="#e6e6e6" shape-rendering="crispEdges"/>
<rect x="70.5" y="329.5" width="1436.5" height="167.5" fill="#fff" shape-rendering="crispEdges"/>
<rect x="2" y="329.5" width="68.5" height="167.5" fill="#e6e6e6" shape-rendering="crispEdges"/>
<rect x="1126.5" y="302.5" width="96" height="26" fill="#d2d2d2" shape-rendering="crispEdges"/>
<rect x="2" y="329.5" width="68" height="27" fill="#d2d2d2" shape-rendering="crispEdges"/>
<path d="M68 306.4V325.8H47.6Z" stroke="none" fill="#b6b6b6" stroke-width="1"/>
<rect x="70.0" y="303" width="1" height="26" fill="#c9c9c9" shape-rendering="crispEdges"/>
<rect x="166.0" y="303" width="1" height="26" fill="#c9c9c9" shape-rendering="crispEdges"/>
<rect x="166.0" y="329.5" width="1" height="167.5" fill="#d8d8d8" shape-rendering="crispEdges"/>
<rect x="262.0" y="303" width="1" height="26" fill="#c9c9c9" shape-rendering="crispEdges"/>
<rect x="262.0" y="329.5" width="1" height="167.5" fill="#d8d8d8" shape-rendering="crispEdges"/>
<rect x="358.0" y="303" width="1" height="26" fill="#c9c9c9" shape-rendering="crispEdges"/>
<rect x="358.0" y="329.5" width="1" height="167.5" fill="#d8d8d8" shape-rendering="crispEdges"/>
<rect x="454.0" y="303" width="1" height="26" fill="#c9c9c9" shape-rendering="crispEdges"/>
<rect x="454.0" y="329.5" width="1" height="167.5" fill="#d8d8d8" shape-rendering="crispEdges"/>
<rect x="550.0" y="303" width="1" height="26" fill="#c9c9c9" shape-rendering="crispEdges"/>
<rect x="550.0" y="329.5" width="1" height="167.5" fill="#d8d8d8" shape-rendering="crispEdges"/>
<rect x="646.0" y="303" width="1" height="26" fill="#c9c9c9" shape-rendering="crispEdges"/>
<rect x="646.0" y="329.5" width="1" height="167.5" fill="#d8d8d8" shape-rendering="crispEdges"/>
<rect x="742.0" y="303" width="1" height="26" fill="#c9c9c9" shape-rendering="crispEdges"/>
<rect x="742.0" y="329.5" width="1" height="167.5" fill="#d8d8d8" shape-rendering="crispEdges"/>
<rect x="838.0" y="303" width="1" height="26" fill="#c9c9c9" shape-rendering="crispEdges"/>
<rect x="838.0" y="329.5" width="1" height="167.5" fill="#d8d8d8" shape-rendering="crispEdges"/>
<rect x="934.0" y="303" width="1" height="26" fill="#c9c9c9" shape-rendering="crispEdges"/>
<rect x="934.0" y="329.5" width="1" height="167.5" fill="#d8d8d8" shape-rendering="crispEdges"/>
<rect x="1030.0" y="303" width="1" height="26" fill="#c9c9c9" shape-rendering="crispEdges"/>
<rect x="1030.0" y="329.5" width="1" height="167.5" fill="#d8d8d8" shape-rendering="crispEdges"/>
<rect x="1126.0" y="303" width="1" height="26" fill="#c9c9c9" shape-rendering="crispEdges"/>
<rect x="1126.0" y="329.5" width="1" height="167.5" fill="#d8d8d8" shape-rendering="crispEdges"/>
<rect x="1222.0" y="303" width="1" height="26" fill="#c9c9c9" shape-rendering="crispEdges"/>
<rect x="1222.0" y="329.5" width="1" height="167.5" fill="#d8d8d8" shape-rendering="crispEdges"/>
<rect x="1318.0" y="303" width="1" height="26" fill="#c9c9c9" shape-rendering="crispEdges"/>
<rect x="1318.0" y="329.5" width="1" height="167.5" fill="#d8d8d8" shape-rendering="crispEdges"/>
<rect x="1414.0" y="303" width="1" height="26" fill="#c9c9c9" shape-rendering="crispEdges"/>
<rect x="1414.0" y="329.5" width="1" height="167.5" fill="#d8d8d8" shape-rendering="crispEdges"/>
<rect x="70.0" y="329.5" width="1" height="167.5" fill="#c0c0c0" shape-rendering="crispEdges"/>
<line x1="2" y1="329" x2="1507" y2="329" stroke="#bdbdbd" stroke-width="1" shape-rendering="crispEdges"/>
<rect x="70.5" y="356.0" width="1436.5" height="1" fill="#d8d8d8" shape-rendering="crispEdges"/>
<rect x="2" y="356.0" width="68.5" height="1" fill="#c6c6c6" shape-rendering="crispEdges"/>
<rect x="70.5" y="383.0" width="1436.5" height="1" fill="#d8d8d8" shape-rendering="crispEdges"/>
<rect x="2" y="383.0" width="68.5" height="1" fill="#c6c6c6" shape-rendering="crispEdges"/>
<rect x="70.5" y="410.0" width="1436.5" height="1" fill="#d8d8d8" shape-rendering="crispEdges"/>
<rect x="2" y="410.0" width="68.5" height="1" fill="#c6c6c6" shape-rendering="crispEdges"/>
<rect x="70.5" y="437.0" width="1436.5" height="1" fill="#d8d8d8" shape-rendering="crispEdges"/>
<rect x="2" y="437.0" width="68.5" height="1" fill="#c6c6c6" shape-rendering="crispEdges"/>
<rect x="70.5" y="465.0" width="1436.5" height="1" fill="#d8d8d8" shape-rendering="crispEdges"/>
<rect x="2" y="465.0" width="68.5" height="1" fill="#c6c6c6" shape-rendering="crispEdges"/>
<rect x="70.5" y="492.0" width="1436.5" height="1" fill="#d8d8d8" shape-rendering="crispEdges"/>
<rect x="2" y="492.0" width="68.5" height="1" fill="#c6c6c6" shape-rendering="crispEdges"/>
<text x="113.29" y="322.40" font-family="Liberation Sans" font-size="18.0" fill="#2b2b2b" textLength="10.44" lengthAdjust="spacingAndGlyphs" stroke="#2b2b2b" stroke-width="0.2">A</text>
<text x="209.14" y="322.40" font-family="Liberation Sans" font-size="18.0" fill="#2b2b2b" textLength="10.30" lengthAdjust="spacingAndGlyphs" stroke="#2b2b2b" stroke-width="0.2">B</text>
<text x="304.76" y="322.40" font-family="Liberation Sans" font-size="18.0" fill="#2b2b2b" textLength="11.28" lengthAdjust="spacingAndGlyphs" stroke="#2b2b2b" stroke-width="0.2">C</text>
<text x="400.63" y="322.40" font-family="Liberation Sans" font-size="18.0" fill="#2b2b2b" textLength="11.23" lengthAdjust="spacingAndGlyphs" stroke="#2b2b2b" stroke-width="0.2">D</text>
<text x="497.05" y="322.40" font-family="Liberation Sans" font-size="18.0" fill="#2b2b2b" textLength="10.31" lengthAdjust="spacingAndGlyphs" stroke="#2b2b2b" stroke-width="0.2">E</text>
<text x="593.47" y="322.40" font-family="Liberation Sans" font-size="18.0" fill="#2b2b2b" textLength="9.38" lengthAdjust="spacingAndGlyphs" stroke="#2b2b2b" stroke-width="0.2">F</text>
<text x="688.59" y="322.40" font-family="Liberation Sans" font-size="18.0" fill="#2b2b2b" textLength="12.17" lengthAdjust="spacingAndGlyphs" stroke="#2b2b2b" stroke-width="0.2">G</text>
<text x="784.88" y="322.40" font-family="Liberation Sans" font-size="18.0" fill="#2b2b2b" textLength="11.19" lengthAdjust="spacingAndGlyphs" stroke="#2b2b2b" stroke-width="0.2">H</text>
<text x="885.02" y="322.40" font-family="Liberation Sans" font-size="18.0" fill="#2b2b2b" textLength="2.93" lengthAdjust="spacingAndGlyphs" stroke="#2b2b2b" stroke-width="0.2">I</text>
<text x="979.14" y="322.40" font-family="Liberation Sans" font-size="18.0" fill="#2b2b2b" textLength="7.56" lengthAdjust="spacingAndGlyphs" stroke="#2b2b2b" stroke-width="0.2">J</text>
<text x="1072.76" y="322.40" font-family="Liberation Sans" font-size="18.0" fill="#2b2b2b" textLength="10.36" lengthAdjust="spacingAndGlyphs" stroke="#2b2b2b" stroke-width="0.2">K</text>
<text x="1169.90" y="322.40" font-family="Liberation Sans" font-size="18.0" fill="#217346" textLength="8.46" lengthAdjust="spacingAndGlyphs" stroke="#217346" stroke-width="0.2">L</text>
<text x="1263.96" y="322.40" font-family="Liberation Sans" font-size="18.0" fill="#2b2b2b" textLength="13.05" lengthAdjust="spacingAndGlyphs" stroke="#2b2b2b" stroke-width="0.2">M</text>
<text x="1360.88" y="322.40" font-family="Liberation Sans" font-size="18.0" fill="#2b2b2b" textLength="11.19" lengthAdjust="spacingAndGlyphs" stroke="#2b2b2b" stroke-width="0.2">N</text>
<text x="1456.42" y="322.40" font-family="Liberation Sans" font-size="18.0" fill="#2b2b2b" textLength="12.20" lengthAdjust="spacingAndGlyphs" stroke="#2b2b2b" stroke-width="0.2">O</text>
<text x="7.85" y="350.10" font-family="Liberation Sans" font-size="18.0" fill="#217346" textLength="56.66" lengthAdjust="spacingAndGlyphs" stroke="#217346" stroke-width="0.2">723878</text>
<text x="74.25" y="350.10" font-family="Liberation Sans" font-size="18.0" fill="#1a1a1a" textLength="44.44" lengthAdjust="spacingAndGlyphs" stroke="#1a1a1a" stroke-width="0.3">Fauci</text>
<text x="171.30" y="350.10" font-family="Liberation Sans" font-size="18.0" fill="#1a1a1a" textLength="71.59" lengthAdjust="spacingAndGlyphs" stroke="#1a1a1a" stroke-width="0.3">Anthony</text>
<text x="266.10" y="350.10" font-family="Liberation Sans" font-size="18.0" fill="#1a1a1a" textLength="10.33" lengthAdjust="spacingAndGlyphs" stroke="#1a1a1a" stroke-width="0.3">S</text>
<text x="362.30" y="350.10" font-family="Liberation Sans" font-size="18.0" fill="#1a1a1a" textLength="65.50" lengthAdjust="spacingAndGlyphs" stroke="#1a1a1a" stroke-width="0.3">U35232</text>
<text x="555.10" y="350.10" font-family="Liberation Sans" font-size="18.0" fill="#1a1a1a" textLength="20.00" lengthAdjust="spacingAndGlyphs" stroke="#1a1a1a" stroke-width="0.3">VA</text>
<path d="M1042.30 337.60L1040.30 350.60M1045.70 337.60L1043.70 350.60M1038.30 341.90H1047.40M1037.80 346.30H1046.90M1052.72 337.60L1050.72 350.60M1056.12 337.60L1054.12 350.60M1048.72 341.90H1057.82M1048.22 346.30H1057.32M1063.14 337.60L1061.14 350.60M1066.54 337.60L1064.54 350.60M1059.14 341.90H1068.24M1058.64 346.30H1067.74M1073.56 337.60L1071.56 350.60M1076.96 337.60L1074.96 350.60M1069.56 341.90H1078.66M1069.06 346.30H1078.16M1083.98 337.60L1081.98 350.60M1087.38 337.60L1085.38 350.60M1079.98 341.90H1089.08M1079.48 346.30H1088.58M1094.40 337.60L1092.40 350.60M1097.80 337.60L1095.80 350.60M1090.40 341.90H1099.50M1089.90 346.30H1099.00M1104.82 337.60L1102.82 350.60M1108.22 337.60L1106.22 350.60M1100.82 341.90H1109.92M1100.32 346.30H1109.42M1115.24 337.60L1113.24 350.60M1118.64 337.60L1116.64 350.60M1111.24 341.90H1120.34M1110.74 346.30H1119.84" stroke="#111" fill="none" stroke-width="1.55"/>
<path d="M1138.30 337.60L1136.30 350.60M1141.70 337.60L1139.70 350.60M1134.30 341.90H1143.40M1133.80 346.30H1142.90M1148.72 337.60L1146.72 350.60M1152.12 337.60L1150.12 350.60M1144.72 341.90H1153.82M1144.22 346.30H1153.32M1159.14 337.60L1157.14 350.60M1162.54 337.60L1160.54 350.60M1155.14 341.90H1164.24M1154.64 346.30H1163.74M1169.56 337.60L1167.56 350.60M1172.96 337.60L1170.96 350.60M1165.56 341.90H1174.66M1165.06 346.30H1174.16M1179.98 337.60L1177.98 350.60M1183.38 337.60L1181.38 350.60M1175.98 341.90H1185.08M1175.48 346.30H1184.58M1190.40 337.60L1188.40 350.60M1193.80 337.60L1191.80 350.60M1186.40 341.90H1195.50M1185.90 346.30H1195.00M1200.82 337.60L1198.82 350.60M1204.22 337.60L1202.22 350.60M1196.82 341.90H1205.92M1196.32 346.30H1205.42M1211.24 337.60L1209.24 350.60M1214.64 337.60L1212.64 350.60M1207.24 341.90H1216.34M1206.74 346.30H1215.84" stroke="#111" fill="none" stroke-width="1.55"/>
<path d="M1234.30 337.60L1232.30 350.60M1237.70 337.60L1235.70 350.60M1230.30 341.90H1239.40M1229.80 346.30H1238.90M1244.72 337.60L1242.72 350.60M1248.12 337.60L1246.12 350.60M1240.72 341.90H1249.82M1240.22 346.30H1249.32M1255.14 337.60L1253.14 350.60M1258.54 337.60L1256.54 350.60M1251.14 341.90H1260.24M1250.64 346.30H1259.74M1265.56 337.60L1263.56 350.60M1268.96 337.60L1266.96 350.60M1261.56 341.90H1270.66M1261.06 346.30H1270.16M1275.98 337.60L1273.98 350.60M1279.38 337.60L1277.38 350.60M1271.98 341.90H1281.08M1271.48 346.30H1280.58M1286.40 337.60L1284.40 350.60M1289.80 337.60L1287.80 350.60M1282.40 341.90H1291.50M1281.90 346.30H1291.00M1296.82 337.60L1294.82 350.60M1300.22 337.60L1298.22 350.60M1292.82 341.90H1301.92M1292.32 346.30H1301.42M1307.24 337.60L1305.24 350.60M1310.64 337.60L1308.64 350.60M1303.24 341.90H1312.34M1302.74 346.30H1311.84" stroke="#111" fill="none" stroke-width="1.55"/>
<text x="7.85" y="377.35" font-family="Liberation Sans" font-size="18.0" fill="#2b2b2b" textLength="56.75" lengthAdjust="spacingAndGlyphs" stroke="#2b2b2b" stroke-width="0.2">723879</text>
<text x="74.18" y="377.35" font-family="Liberation Sans" font-size="18.0" fill="#1a1a1a" textLength="92.09" lengthAdjust="spacingAndGlyphs" stroke="#1a1a1a" stroke-width="0.3">Blackwood</text>
<text x="170.35" y="377.35" font-family="Liberation Sans" font-size="18.0" fill="#1a1a1a" textLength="64.51" lengthAdjust="spacingAndGlyphs" stroke="#1a1a1a" stroke-width="0.3">Kristine</text>
<text x="362.30" y="377.35" font-family="Liberation Sans" font-size="18.0" fill="#1a1a1a" textLength="65.50" lengthAdjust="spacingAndGlyphs" stroke="#1a1a1a" stroke-width="0.3">U35367</text>
<text x="484.91" y="377.35" font-family="Liberation Sans" font-size="18.0" fill="#1a1a1a" textLength="61.97" lengthAdjust="spacingAndGlyphs" stroke="#1a1a1a" stroke-width="0.3">108199</text>
<text x="555.10" y="377.35" font-family="Liberation Sans" font-size="18.0" fill="#1a1a1a" textLength="20.00" lengthAdjust="spacingAndGlyphs" stroke="#1a1a1a" stroke-width="0.3">VA</text>
<path d="M658.10 364.85L656.10 377.85M661.50 364.85L659.50 377.85M654.10 369.15H663.20M653.60 373.55H662.70M668.52 364.85L666.52 377.85M671.92 364.85L669.92 377.85M664.52 369.15H673.62M664.02 373.55H673.12M678.94 364.85L676.94 377.85M682.34 364.85L680.34 377.85M674.94 369.15H684.04M674.44 373.55H683.54M689.36 364.85L687.36 377.85M692.76 364.85L690.76 377.85M685.36 369.15H694.46M684.86 373.55H693.96M699.78 364.85L697.78 377.85M703.18 364.85L701.18 377.85M695.78 369.15H704.88M695.28 373.55H704.38M710.20 364.85L708.20 377.85M713.60 364.85L711.60 377.85M706.20 369.15H715.30M705.70 373.55H714.80M720.62 364.85L718.62 377.85M724.02 364.85L722.02 377.85M716.62 369.15H725.72M716.12 373.55H725.22M731.04 364.85L729.04 377.85M734.44 364.85L732.44 377.85M727.04 369.15H736.14M726.54 373.55H735.64" stroke="#111" fill="none" stroke-width="1.55"/>
<text x="746.45" y="377.35" font-family="Liberation Sans" font-size="18.0" fill="#1a1a1a" textLength="52.50" lengthAdjust="spacingAndGlyphs" stroke="#1a1a1a" stroke-width="0.3">B0401</text>
<path d="M850.10 364.85L848.10 377.85M853.50 364.85L851.50 377.85M846.10 369.15H855.20M845.60 373.55H854.70M860.52 364.85L858.52 377.85M863.92 364.85L861.92 377.85M856.52 369.15H865.62M856.02 373.55H865.12M870.94 364.85L868.94 377.85M874.34 364.85L872.34 377.85M866.94 369.15H876.04M866.44 373.55H875.54M881.36 364.85L879.36 377.85M884.76 364.85L882.76 377.85M877.36 369.15H886.46M876.86 373.55H885.96M891.78 364.85L889.78 377.85M895.18 364.85L893.18 377.85M887.78 369.15H896.88M887.28 373.55H896.38M902.20 364.85L900.20 377.85M905.60 364.85L903.60 377.85M898.20 369.15H907.30M897.70 373.55H906.80M912.62 364.85L910.62 377.85M916.02 364.85L914.02 377.85M908.62 369.15H917.72M908.12 373.55H917.22M923.04 364.85L921.04 377.85M926.44 364.85L924.44 377.85M919.04 369.15H928.14M918.54 373.55H927.64" stroke="#111" fill="none" stroke-width="1.55"/>
<path d="M1042.30 364.85L1040.30 377.85M1045.70 364.85L1043.70 377.85M1038.30 369.15H1047.40M1037.80 373.55H1046.90M1052.72 364.85L1050.72 377.85M1056.12 364.85L1054.12 377.85M1048.72 369.15H1057.82M1048.22 373.55H1057.32M1063.14 364.85L1061.14 377.85M1066.54 364.85L1064.54 377.85M1059.14 369.15H1068.24M1058.64 373.55H1067.74M1073.56 364.85L1071.56 377.85M1076.96 364.85L1074.96 377.85M1069.56 369.15H1078.66M1069.06 373.55H1078.16M1083.98 364.85L1081.98 377.85M1087.38 364.85L1085.38 377.85M1079.98 369.15H1089.08M1079.48 373.55H1088.58M1094.40 364.85L1092.40 377.85M1097.80 364.85L1095.80 377.85M1090.40 369.15H1099.50M1089.90 373.55H1099.00M1104.82 364.85L1102.82 377.85M1108.22 364.85L1106.22 377.85M1100.82 369.15H1109.92M1100.32 373.55H1109.42M1115.24 364.85L1113.24 377.85M1118.64 364.85L1116.64 377.85M1111.24 369.15H1120.34M1110.74 373.55H1119.84" stroke="#111" fill="none" stroke-width="1.55"/>
<path d="M1138.30 364.85L1136.30 377.85M1141.70 364.85L1139.70 377.85M1134.30 369.15H1143.40M1133.80 373.55H1142.90M1148.72 364.85L1146.72 377.85M1152.12 364.85L1150.12 377.85M1144.72 369.15H1153.82M1144.22 373.55H1153.32M1159.14 364.85L1157.14 377.85M1162.54 364.85L1160.54 377.85M1155.14 369.15H1164.24M1154.64 373.55H1163.74M1169.56 364.85L1167.56 377.85M1172.96 364.85L1170.96 377.85M1165.56 369.15H1174.66M1165.06 373.55H1174.16M1179.98 364.85L1177.98 377.85M1183.38 364.85L1181.38 377.85M1175.98 369.15H1185.08M1175.48 373.55H1184.58M1190.40 364.85L1188.40 377.85M1193.80 364.85L1191.80 377.85M1186.40 369.15H1195.50M1185.90 373.55H1195.00M1200.82 364.85L1198.82 377.85M1204.22 364.85L1202.22 377.85M1196.82 369.15H1205.92M1196.32 373.55H1205.42M1211.24 364.85L1209.24 377.85M1214.64 364.85L1212.64 377.85M1207.24 369.15H1216.34M1206.74 373.55H1215.84" stroke="#111" fill="none" stroke-width="1.55"/>
<path d="M1234.30 364.85L1232.30 377.85M1237.70 364.85L1235.70 377.85M1230.30 369.15H1239.40M1229.80 373.55H1238.90M1244.72 364.85L1242.72 377.85M1248.12 364.85L1246.12 377.85M1240.72 369.15H1249.82M1240.22 373.55H1249.32M1255.14 364.85L1253.14 377.85M1258.54 364.85L1256.54 377.85M1251.14 369.15H1260.24M1250.64 373.55H1259.74M1265.56 364.85L1263.56 377.85M1268.96 364.85L1266.96 377.85M1261.56 369.15H1270.66M1261.06 373.55H1270.16M1275.98 364.85L1273.98 377.85M1279.38 364.85L1277.38 377.85M1271.98 369.15H1281.08M1271.48 373.55H1280.58M1286.40 364.85L1284.40 377.85M1289.80 364.85L1287.80 377.85M1282.40 369.15H1291.50M1281.90 373.55H1291.00M1296.82 364.85L1294.82 377.85M1300.22 364.85L1298.22 377.85M1292.82 369.15H1301.92M1292.32 373.55H1301.42M1307.24 364.85L1305.24 377.85M1310.64 364.85L1308.64 377.85M1303.24 369.15H1312.34M1302.74 373.55H1311.84" stroke="#111" fill="none" stroke-width="1.55"/>
<text x="7.85" y="404.60" font-family="Liberation Sans" font-size="18.0" fill="#2b2b2b" textLength="56.58" lengthAdjust="spacingAndGlyphs" stroke="#2b2b2b" stroke-width="0.2">723880</text>
<text x="74.15" y="404.60" font-family="Liberation Sans" font-size="18.0" fill="#1a1a1a" textLength="45.32" lengthAdjust="spacingAndGlyphs" stroke="#1a1a1a" stroke-width="0.3">Borio</text>
<text x="170.46" y="404.60" font-family="Liberation Sans" font-size="18.0" fill="#1a1a1a" textLength="63.00" lengthAdjust="spacingAndGlyphs" stroke="#1a1a1a" stroke-width="0.3">Luciana</text>
<text x="266.36" y="404.60" font-family="Liberation Sans" font-size="18.0" fill="#1a1a1a" textLength="8.61" lengthAdjust="spacingAndGlyphs" stroke="#1a1a1a" stroke-width="0.3">L</text>
<text x="362.30" y="404.60" font-family="Liberation Sans" font-size="18.0" fill="#1a1a1a" textLength="65.50" lengthAdjust="spacingAndGlyphs" stroke="#1a1a1a" stroke-width="0.3">U35277</text>
<text x="484.91" y="404.60" font-family="Liberation Sans" font-size="18.0" fill="#1a1a1a" textLength="61.77" lengthAdjust="spacingAndGlyphs" stroke="#1a1a1a" stroke-width="0.3">101330</text>
<text x="555.10" y="404.60" font-family="Liberation Sans" font-size="18.0" fill="#1a1a1a" textLength="20.00" lengthAdjust="spacingAndGlyphs" stroke="#1a1a1a" stroke-width="0.3">VA</text>
<path d="M658.10 392.10L656.10 405.10M661.50 392.10L659.50 405.10M654.10 396.40H663.20M653.60 400.80H662.70M668.52 392.10L666.52 405.10M671.92 392.10L669.92 405.10M664.52 396.40H673.62M664.02 400.80H673.12M678.94 392.10L676.94 405.10M682.34 392.10L680.34 405.10M674.94 396.40H684.04M674.44 400.80H683.54M689.36 392.10L687.36 405.10M692.76 392.10L690.76 405.10M685.36 396.40H694.46M684.86 400.80H693.96M699.78 392.10L697.78 405.10M703.18 392.10L701.18 405.10M695.78 396.40H704.88M695.28 400.80H704.38M710.20 392.10L708.20 405.10M713.60 392.10L711.60 405.10M706.20 396.40H715.30M705.70 400.80H714.80M720.62 392.10L718.62 405.10M724.02 392.10L722.02 405.10M716.62 396.40H725.72M716.12 400.80H725.22M731.04 392.10L729.04 405.10M734.44 392.10L732.44 405.10M727.04 396.40H736.14M726.54 400.80H735.64" stroke="#111" fill="none" stroke-width="1.55"/>
<text x="746.45" y="404.60" font-family="Liberation Sans" font-size="18.0" fill="#1a1a1a" textLength="52.50" lengthAdjust="spacingAndGlyphs" stroke="#1a1a1a" stroke-width="0.3">B0401</text>
<path d="M850.10 392.10L848.10 405.10M853.50 392.10L851.50 405.10M846.10 396.40H855.20M845.60 400.80H854.70M860.52 392.10L858.52 405.10M863.92 392.10L861.92 405.10M856.52 396.40H865.62M856.02 400.80H865.12M870.94 392.10L868.94 405.10M874.34 392.10L872.34 405.10M866.94 396.40H876.04M866.44 400.80H875.54M881.36 392.10L879.36 405.10M884.76 392.10L882.76 405.10M877.36 396.40H886.46M876.86 400.80H885.96M891.78 392.10L889.78 405.10M895.18 392.10L893.18 405.10M887.78 396.40H896.88M887.28 400.80H896.38M902.20 392.10L900.20 405.10M905.60 392.10L903.60 405.10M898.20 396.40H907.30M897.70 400.80H906.80M912.62 392.10L910.62 405.10M916.02 392.10L914.02 405.10M908.62 396.40H917.72M908.12 400.80H917.22M923.04 392.10L921.04 405.10M926.44 392.10L924.44 405.10M919.04 396.40H928.14M918.54 400.80H927.64" stroke="#111" fill="none" stroke-width="1.55"/>
<path d="M1042.30 392.10L1040.30 405.10M1045.70 392.10L1043.70 405.10M1038.30 396.40H1047.40M1037.80 400.80H1046.90M1052.72 392.10L1050.72 405.10M1056.12 392.10L1054.12 405.10M1048.72 396.40H1057.82M1048.22 400.80H1057.32M1063.14 392.10L1061.14 405.10M1066.54 392.10L1064.54 405.10M1059.14 396.40H1068.24M1058.64 400.80H1067.74M1073.56 392.10L1071.56 405.10M1076.96 392.10L1074.96 405.10M1069.56 396.40H1078.66M1069.06 400.80H1078.16M1083.98 392.10L1081.98 405.10M1087.38 392.10L1085.38 405.10M1079.98 396.40H1089.08M1079.48 400.80H1088.58M1094.40 392.10L1092.40 405.10M1097.80 392.10L1095.80 405.10M1090.40 396.40H1099.50M1089.90 400.80H1099.00M1104.82 392.10L1102.82 405.10M1108.22 392.10L1106.22 405.10M1100.82 396.40H1109.92M1100.32 400.80H1109.42M1115.24 392.10L1113.24 405.10M1118.64 392.10L1116.64 405.10M1111.24 396.40H1120.34M1110.74 400.80H1119.84" stroke="#111" fill="none" stroke-width="1.55"/>
<path d="M1138.30 392.10L1136.30 405.10M1141.70 392.10L1139.70 405.10M1134.30 396.40H1143.40M1133.80 400.80H1142.90M1148.72 392.10L1146.72 405.10M1152.12 392.10L1150.12 405.10M1144.72 396.40H1153.82M1144.22 400.80H1153.32M1159.14 392.10L1157.14 405.10M1162.54 392.10L1160.54 405.10M1155.14 396.40H1164.24M1154.64 400.80H1163.74M1169.56 392.10L1167.56 405.10M1172.96 392.10L1170.96 405.10M1165.56 396.40H1174.66M1165.06 400.80H1174.16M1179.98 392.10L1177.98 405.10M1183.38 392.10L1181.38 405.10M1175.98 396.40H1185.08M1175.48 400.80H1184.58M1190.40 392.10L1188.40 405.10M1193.80 392.10L1191.80 405.10M1186.40 396.40H1195.50M1185.90 400.80H1195.00M1200.82 392.10L1198.82 405.10M1204.22 392.10L1202.22 405.10M1196.82 396.40H1205.92M1196.32 400.80H1205.42M1211.24 392.10L1209.24 405.10M1214.64 392.10L1212.64 405.10M1207.24 396.40H1216.34M1206.74 400.80H1215.84" stroke="#111" fill="none" stroke-width="1.55"/>
<path d="M1234.30 392.10L1232.30 405.10M1237.70 392.10L1235.70 405.10M1230.30 396.40H1239.40M1229.80 400.80H1238.90M1244.72 392.10L1242.72 405.10M1248.12 392.10L1246.12 405.10M1240.72 396.40H1249.82M1240.22 400.80H1249.32M1255.14 392.10L1253.14 405.10M1258.54 392.10L1256.54 405.10M1251.14 396.40H1260.24M1250.64 400.80H1259.74M1265.56 392.10L1263.56 405.10M1268.96 392.10L1266.96 405.10M1261.56 396.40H1270.66M1261.06 400.80H1270.16M1275.98 392.10L1273.98 405.10M1279.38 392.10L1277.38 405.10M1271.98 396.40H1281.08M1271.48 400.80H1280.58M1286.40 392.10L1284.40 405.10M1289.80 392.10L1287.80 405.10M1282.40 396.40H1291.50M1281.90 400.80H1291.00M1296.82 392.10L1294.82 405.10M1300.22 392.10L1298.22 405.10M1292.82 396.40H1301.92M1292.32 400.80H1301.42M1307.24 392.10L1305.24 405.10M1310.64 392.10L1308.64 405.10M1303.24 396.40H1312.34M1302.74 400.80H1311.84" stroke="#111" fill="none" stroke-width="1.55"/>
<text x="7.85" y="431.85" font-family="Liberation Sans" font-size="18.0" fill="#2b2b2b" textLength="56.75" lengthAdjust="spacingAndGlyphs" stroke="#2b2b2b" stroke-width="0.2">723881</text>
<text x="74.18" y="431.85" font-family="Liberation Sans" font-size="18.0" fill="#1a1a1a" textLength="80.06" lengthAdjust="spacingAndGlyphs" stroke="#1a1a1a" stroke-width="0.3">Robinson</text>
<text x="170.39" y="431.85" font-family="Liberation Sans" font-size="18.0" fill="#1a1a1a" textLength="49.30" lengthAdjust="spacingAndGlyphs" stroke="#1a1a1a" stroke-width="0.3">Robin</text>
<text x="266.40" y="431.85" font-family="Liberation Sans" font-size="18.0" fill="#1a1a1a" textLength="10.33" lengthAdjust="spacingAndGlyphs" stroke="#1a1a1a" stroke-width="0.3">A</text>
<text x="362.30" y="431.85" font-family="Liberation Sans" font-size="18.0" fill="#1a1a1a" textLength="65.50" lengthAdjust="spacingAndGlyphs" stroke="#1a1a1a" stroke-width="0.3">U35232</text>
<text x="555.10" y="431.85" font-family="Liberation Sans" font-size="18.0" fill="#1a1a1a" textLength="20.00" lengthAdjust="spacingAndGlyphs" stroke="#1a1a1a" stroke-width="0.3">VA</text>
<path d="M1042.30 419.35L1040.30 432.35M1045.70 419.35L1043.70 432.35M1038.30 423.65H1047.40M1037.80 428.05H1046.90M1052.72 419.35L1050.72 432.35M1056.12 419.35L1054.12 432.35M1048.72 423.65H1057.82M1048.22 428.05H1057.32M1063.14 419.35L1061.14 432.35M1066.54 419.35L1064.54 432.35M1059.14 423.65H1068.24M1058.64 428.05H1067.74M1073.56 419.35L1071.56 432.35M1076.96 419.35L1074.96 432.35M1069.56 423.65H1078.66M1069.06 428.05H1078.16M1083.98 419.35L1081.98 432.35M1087.38 419.35L1085.38 432.35M1079.98 423.65H1089.08M1079.48 428.05H1088.58M1094.40 419.35L1092.40 432.35M1097.80 419.35L1095.80 432.35M1090.40 423.65H1099.50M1089.90 428.05H1099.00M1104.82 419.35L1102.82 432.35M1108.22 419.35L1106.22 432.35M1100.82 423.65H1109.92M1100.32 428.05H1109.42M1115.24 419.35L1113.24 432.35M1118.64 419.35L1116.64 432.35M1111.24 423.65H1120.34M1110.74 428.05H1119.84" stroke="#111" fill="none" stroke-width="1.55"/>
<path d="M1138.30 419.35L1136.30 432.35M1141.70 419.35L1139.70 432.35M1134.30 423.65H1143.40M1133.80 428.05H1142.90M1148.72 419.35L1146.72 432.35M1152.12 419.35L1150.12 432.35M1144.72 423.65H1153.82M1144.22 428.05H1153.32M1159.14 419.35L1157.14 432.35M1162.54 419.35L1160.54 432.35M1155.14 423.65H1164.24M1154.64 428.05H1163.74M1169.56 419.35L1167.56 432.35M1172.96 419.35L1170.96 432.35M1165.56 423.65H1174.66M1165.06 428.05H1174.16M1179.98 419.35L1177.98 432.35M1183.38 419.35L1181.38 432.35M1175.98 423.65H1185.08M1175.48 428.05H1184.58M1190.40 419.35L1188.40 432.35M1193.80 419.35L1191.80 432.35M1186.40 423.65H1195.50M1185.90 428.05H1195.00M1200.82 419.35L1198.82 432.35M1204.22 419.35L1202.22 432.35M1196.82 423.65H1205.92M1196.32 428.05H1205.42M1211.24 419.35L1209.24 432.35M1214.64 419.35L1212.64 432.35M1207.24 423.65H1216.34M1206.74 428.05H1215.84" stroke="#111" fill="none" stroke-width="1.55"/>
<path d="M1234.30 419.35L1232.30 432.35M1237.70 419.35L1235.70 432.35M1230.30 423.65H1239.40M1229.80 428.05H1238.90M1244.72 419.35L1242.72 432.35M1248.12 419.35L1246.12 432.35M1240.72 423.65H1249.82M1240.22 428.05H1249.32M1255.14 419.35L1253.14 432.35M1258.54 419.35L1256.54 432.35M1251.14 423.65H1260.24M1250.64 428.05H1259.74M1265.56 419.35L1263.56 432.35M1268.96 419.35L1266.96 432.35M1261.56 423.65H1270.66M1261.06 428.05H1270.16M1275.98 419.35L1273.98 432.35M1279.38 419.35L1277.38 432.35M1271.98 423.65H1281.08M1271.48 428.05H1280.58M1286.40 419.35L1284.40 432.35M1289.80 419.35L1287.80 432.35M1282.40 423.65H1291.50M1281.90 428.05H1291.00M1296.82 419.35L1294.82 432.35M1300.22 419.35L1298.22 432.35M1292.82 423.65H1301.92M1292.32 428.05H1301.42M1307.24 419.35L1305.24 432.35M1310.64 419.35L1308.64 432.35M1303.24 423.65H1312.34M1302.74 428.05H1311.84" stroke="#111" fill="none" stroke-width="1.55"/>
<text x="7.85" y="459.20" font-family="Liberation Sans" font-size="18.0" fill="#2b2b2b" textLength="56.75" lengthAdjust="spacingAndGlyphs" stroke="#2b2b2b" stroke-width="0.2">723882</text>
<text x="74.25" y="459.20" font-family="Liberation Sans" font-size="18.0" fill="#1a1a1a" textLength="43.35" lengthAdjust="spacingAndGlyphs" stroke="#1a1a1a" stroke-width="0.3">Redd</text>
<text x="170.04" y="459.20" font-family="Liberation Sans" font-size="18.0" fill="#1a1a1a" textLength="70.81" lengthAdjust="spacingAndGlyphs" stroke="#1a1a1a" stroke-width="0.3">Stephen</text>
<text x="265.83" y="459.20" font-family="Liberation Sans" font-size="18.0" fill="#1a1a1a" textLength="11.18" lengthAdjust="spacingAndGlyphs" stroke="#1a1a1a" stroke-width="0.3">C</text>
<text x="362.30" y="459.20" font-family="Liberation Sans" font-size="18.0" fill="#1a1a1a" textLength="65.50" lengthAdjust="spacingAndGlyphs" stroke="#1a1a1a" stroke-width="0.3">U35232</text>
<text x="484.91" y="459.20" font-family="Liberation Sans" font-size="18.0" fill="#1a1a1a" textLength="61.97" lengthAdjust="spacingAndGlyphs" stroke="#1a1a1a" stroke-width="0.3">108101</text>
<text x="555.10" y="459.20" font-family="Liberation Sans" font-size="18.0" fill="#1a1a1a" textLength="20.00" lengthAdjust="spacingAndGlyphs" stroke="#1a1a1a" stroke-width="0.3">VA</text>
<path d="M658.10 446.70L656.10 459.70M661.50 446.70L659.50 459.70M654.10 451.00H663.20M653.60 455.40H662.70M668.52 446.70L666.52 459.70M671.92 446.70L669.92 459.70M664.52 451.00H673.62M664.02 455.40H673.12M678.94 446.70L676.94 459.70M682.34 446.70L680.34 459.70M674.94 451.00H684.04M674.44 455.40H683.54M689.36 446.70L687.36 459.70M692.76 446.70L690.76 459.70M685.36 451.00H694.46M684.86 455.40H693.96M699.78 446.70L697.78 459.70M703.18 446.70L701.18 459.70M695.78 451.00H704.88M695.28 455.40H704.38M710.20 446.70L708.20 459.70M713.60 446.70L711.60 459.70M706.20 451.00H715.30M705.70 455.40H714.80M720.62 446.70L718.62 459.70M724.02 446.70L722.02 459.70M716.62 451.00H725.72M716.12 455.40H725.22M731.04 446.70L729.04 459.70M734.44 446.70L732.44 459.70M727.04 451.00H736.14M726.54 455.40H735.64" stroke="#111" fill="none" stroke-width="1.55"/>
<text x="746.45" y="459.20" font-family="Liberation Sans" font-size="18.0" fill="#1a1a1a" textLength="52.50" lengthAdjust="spacingAndGlyphs" stroke="#1a1a1a" stroke-width="0.3">B0401</text>
<path d="M850.10 446.70L848.10 459.70M853.50 446.70L851.50 459.70M846.10 451.00H855.20M845.60 455.40H854.70M860.52 446.70L858.52 459.70M863.92 446.70L861.92 459.70M856.52 451.00H865.62M856.02 455.40H865.12M870.94 446.70L868.94 459.70M874.34 446.70L872.34 459.70M866.94 451.00H876.04M866.44 455.40H875.54M881.36 446.70L879.36 459.70M884.76 446.70L882.76 459.70M877.36 451.00H886.46M876.86 455.40H885.96M891.78 446.70L889.78 459.70M895.18 446.70L893.18 459.70M887.78 451.00H896.88M887.28 455.40H896.38M902.20 446.70L900.20 459.70M905.60 446.70L903.60 459.70M898.20 451.00H907.30M897.70 455.40H906.80M912.62 446.70L910.62 459.70M916.02 446.70L914.02 459.70M908.62 451.00H917.72M908.12 455.40H917.22M923.04 446.70L921.04 459.70M926.44 446.70L924.44 459.70M919.04 451.00H928.14M918.54 455.40H927.64" stroke="#111" fill="none" stroke-width="1.55"/>
<path d="M1042.30 446.70L1040.30 459.70M1045.70 446.70L1043.70 459.70M1038.30 451.00H1047.40M1037.80 455.40H1046.90M1052.72 446.70L1050.72 459.70M1056.12 446.70L1054.12 459.70M1048.72 451.00H1057.82M1048.22 455.40H1057.32M1063.14 446.70L1061.14 459.70M1066.54 446.70L1064.54 459.70M1059.14 451.00H1068.24M1058.64 455.40H1067.74M1073.56 446.70L1071.56 459.70M1076.96 446.70L1074.96 459.70M1069.56 451.00H1078.66M1069.06 455.40H1078.16M1083.98 446.70L1081.98 459.70M1087.38 446.70L1085.38 459.70M1079.98 451.00H1089.08M1079.48 455.40H1088.58M1094.40 446.70L1092.40 459.70M1097.80 446.70L1095.80 459.70M1090.40 451.00H1099.50M1089.90 455.40H1099.00M1104.82 446.70L1102.82 459.70M1108.22 446.70L1106.22 459.70M1100.82 451.00H1109.92M1100.32 455.40H1109.42M1115.24 446.70L1113.24 459.70M1118.64 446.70L1116.64 459.70M1111.24 451.00H1120.34M1110.74 455.40H1119.84" stroke="#111" fill="none" stroke-width="1.55"/>
<path d="M1138.30 446.70L1136.30 459.70M1141.70 446.70L1139.70 459.70M1134.30 451.00H1143.40M1133.80 455.40H1142.90M1148.72 446.70L1146.72 459.70M1152.12 446.70L1150.12 459.70M1144.72 451.00H1153.82M1144.22 455.40H1153.32M1159.14 446.70L1157.14 459.70M1162.54 446.70L1160.54 459.70M1155.14 451.00H1164.24M1154.64 455.40H1163.74M1169.56 446.70L1167.56 459.70M1172.96 446.70L1170.96 459.70M1165.56 451.00H1174.66M1165.06 455.40H1174.16M1179.98 446.70L1177.98 459.70M1183.38 446.70L1181.38 459.70M1175.98 451.00H1185.08M1175.48 455.40H1184.58M1190.40 446.70L1188.40 459.70M1193.80 446.70L1191.80 459.70M1186.40 451.00H1195.50M1185.90 455.40H1195.00M1200.82 446.70L1198.82 459.70M1204.22 446.70L1202.22 459.70M1196.82 451.00H1205.92M1196.32 455.40H1205.42M1211.24 446.70L1209.24 459.70M1214.64 446.70L1212.64 459.70M1207.24 451.00H1216.34M1206.74 455.40H1215.84" stroke="#111" fill="none" stroke-width="1.55"/>
<path d="M1234.30 446.70L1232.30 459.70M1237.70 446.70L1235.70 459.70M1230.30 451.00H1239.40M1229.80 455.40H1238.90M1244.72 446.70L1242.72 459.70M1248.12 446.70L1246.12 459.70M1240.72 451.00H1249.82M1240.22 455.40H1249.32M1255.14 446.70L1253.14 459.70M1258.54 446.70L1256.54 459.70M1251.14 451.00H1260.24M1250.64 455.40H1259.74M1265.56 446.70L1263.56 459.70M1268.96 446.70L1266.96 459.70M1261.56 451.00H1270.66M1261.06 455.40H1270.16M1275.98 446.70L1273.98 459.70M1279.38 446.70L1277.38 459.70M1271.98 451.00H1281.08M1271.48 455.40H1280.58M1286.40 446.70L1284.40 459.70M1289.80 446.70L1287.80 459.70M1282.40 451.00H1291.50M1281.90 455.40H1291.00M1296.82 446.70L1294.82 459.70M1300.22 446.70L1298.22 459.70M1292.82 451.00H1301.92M1292.32 455.40H1301.42M1307.24 446.70L1305.24 459.70M1310.64 446.70L1308.64 459.70M1303.24 451.00H1312.34M1302.74 455.40H1311.84" stroke="#111" fill="none" stroke-width="1.55"/>
<text x="7.85" y="486.40" font-family="Liberation Sans" font-size="18.0" fill="#2b2b2b" textLength="56.66" lengthAdjust="spacingAndGlyphs" stroke="#2b2b2b" stroke-width="0.2">723883</text>
<text x="74.17" y="486.40" font-family="Liberation Sans" font-size="18.0" fill="#1a1a1a" textLength="64.69" lengthAdjust="spacingAndGlyphs" stroke="#1a1a1a" stroke-width="0.3">Frieden</text>
<text x="170.33" y="486.40" font-family="Liberation Sans" font-size="18.0" fill="#1a1a1a" textLength="67.07" lengthAdjust="spacingAndGlyphs" stroke="#1a1a1a" stroke-width="0.3">Thomas</text>
<text x="266.36" y="486.40" font-family="Liberation Sans" font-size="18.0" fill="#1a1a1a" textLength="11.18" lengthAdjust="spacingAndGlyphs" stroke="#1a1a1a" stroke-width="0.3">R</text>
<text x="362.30" y="486.40" font-family="Liberation Sans" font-size="18.0" fill="#1a1a1a" textLength="65.50" lengthAdjust="spacingAndGlyphs" stroke="#1a1a1a" stroke-width="0.3">U35232</text>
<text x="555.10" y="486.40" font-family="Liberation Sans" font-size="18.0" fill="#1a1a1a" textLength="20.00" lengthAdjust="spacingAndGlyphs" stroke="#1a1a1a" stroke-width="0.3">VA</text>
<path d="M1042.30 473.90L1040.30 486.90M1045.70 473.90L1043.70 486.90M1038.30 478.20H1047.40M1037.80 482.60H1046.90M1052.72 473.90L1050.72 486.90M1056.12 473.90L1054.12 486.90M1048.72 478.20H1057.82M1048.22 482.60H1057.32M1063.14 473.90L1061.14 486.90M1066.54 473.90L1064.54 486.90M1059.14 478.20H1068.24M1058.64 482.60H1067.74M1073.56 473.90L1071.56 486.90M1076.96 473.90L1074.96 486.90M1069.56 478.20H1078.66M1069.06 482.60H1078.16M1083.98 473.90L1081.98 486.90M1087.38 473.90L1085.38 486.90M1079.98 478.20H1089.08M1079.48 482.60H1088.58M1094.40 473.90L1092.40 486.90M1097.80 473.90L1095.80 486.90M1090.40 478.20H1099.50M1089.90 482.60H1099.00M1104.82 473.90L1102.82 486.90M1108.22 473.90L1106.22 486.90M1100.82 478.20H1109.92M1100.32 482.60H1109.42M1115.24 473.90L1113.24 486.90M1118.64 473.90L1116.64 486.90M1111.24 478.20H1120.34M1110.74 482.60H1119.84" stroke="#111" fill="none" stroke-width="1.55"/>
<path d="M1138.30 473.90L1136.30 486.90M1141.70 473.90L1139.70 486.90M1134.30 478.20H1143.40M1133.80 482.60H1142.90M1148.72 473.90L1146.72 486.90M1152.12 473.90L1150.12 486.90M1144.72 478.20H1153.82M1144.22 482.60H1153.32M1159.14 473.90L1157.14 486.90M1162.54 473.90L1160.54 486.90M1155.14 478.20H1164.24M1154.64 482.60H1163.74M1169.56 473.90L1167.56 486.90M1172.96 473.90L1170.96 486.90M1165.56 478.20H1174.66M1165.06 482.60H1174.16M1179.98 473.90L1177.98 486.90M1183.38 473.90L1181.38 486.90M1175.98 478.20H1185.08M1175.48 482.60H1184.58M1190.40 473.90L1188.40 486.90M1193.80 473.90L1191.80 486.90M1186.40 478.20H1195.50M1185.90 482.60H1195.00M1200.82 473.90L1198.82 486.90M1204.22 473.90L1202.22 486.90M1196.82 478.20H1205.92M1196.32 482.60H1205.42M1211.24 473.90L1209.24 486.90M1214.64 473.90L1212.64 486.90M1207.24 478.20H1216.34M1206.74 482.60H1215.84" stroke="#111" fill="none" stroke-width="1.55"/>
<path d="M1234.30 473.90L1232.30 486.90M1237.70 473.90L1235.70 486.90M1230.30 478.20H1239.40M1229.80 482.60H1238.90M1244.72 473.90L1242.72 486.90M1248.12 473.90L1246.12 486.90M1240.72 478.20H1249.82M1240.22 482.60H1249.32M1255.14 473.90L1253.14 486.90M1258.54 473.90L1256.54 486.90M1251.14 478.20H1260.24M1250.64 482.60H1259.74M1265.56 473.90L1263.56 486.90M1268.96 473.90L1266.96 486.90M1261.56 478.20H1270.66M1261.06 482.60H1270.16M1275.98 473.90L1273.98 486.90M1279.38 473.90L1277.38 486.90M1271.98 478.20H1281.08M1271.48 482.60H1280.58M1286.40 473.90L1284.40 486.90M1289.80 473.90L1287.80 486.90M1282.40 478.20H1291.50M1281.90 482.60H1291.00M1296.82 473.90L1294.82 486.90M1300.22 473.90L1298.22 486.90M1292.82 478.20H1301.92M1292.32 482.60H1301.42M1307.24 473.90L1305.24 486.90M1310.64 473.90L1308.64 486.90M1303.24 478.20H1312.34M1302.74 482.60H1311.84" stroke="#111" fill="none" stroke-width="1.55"/>
<clipPath id="gc"><rect x="70" y="329" width="1436.6" height="168"/></clipPath><g clip-path="url(#gc)">
<text x="1498.82" y="350.10" font-family="Liberation Sans" font-size="18.0" fill="#1a1a1a" textLength="9.21" lengthAdjust="spacingAndGlyphs" stroke="#1a1a1a" stroke-width="0.3">4</text>
<text x="1497.95" y="377.35" font-family="Liberation Sans" font-size="18.0" fill="#1a1a1a" textLength="9.21" lengthAdjust="spacingAndGlyphs" stroke="#1a1a1a" stroke-width="0.3">1</text>
<text x="1497.95" y="404.60" font-family="Liberation Sans" font-size="18.0" fill="#1a1a1a" textLength="9.21" lengthAdjust="spacingAndGlyphs" stroke="#1a1a1a" stroke-width="0.3">1</text>
<text x="1498.82" y="431.85" font-family="Liberation Sans" font-size="18.0" fill="#1a1a1a" textLength="9.21" lengthAdjust="spacingAndGlyphs" stroke="#1a1a1a" stroke-width="0.3">4</text>
<text x="1498.82" y="459.20" font-family="Liberation Sans" font-size="18.0" fill="#1a1a1a" textLength="9.21" lengthAdjust="spacingAndGlyphs" stroke="#1a1a1a" stroke-width="0.3">4</text>
<text x="1498.82" y="486.40" font-family="Liberation Sans" font-size="18.0" fill="#1a1a1a" textLength="9.21" lengthAdjust="spacingAndGlyphs" stroke="#1a1a1a" stroke-width="0.3">4</text>
</g>
<rect x="69.8" y="329.5" width="1.5" height="27" fill="#217346"/>
<rect x="1126.9" y="328.9" width="96.1" height="27.7" fill="none" stroke="#217346" stroke-width="1.7"/>
<rect x="1218.5" y="352.5" width="7" height="7" fill="#fff" shape-rendering="crispEdges"/>
<rect x="1219.5" y="353.5" width="5" height="5" fill="#217346" shape-rendering="crispEdges"/>
<rect x="1507" y="302.5" width="27" height="195" fill="#e1e1e1" shape-rendering="crispEdges"/>
<rect x="1509.5" y="303.5" width="22" height="22" fill="#fff" stroke="#b9b9b9" stroke-width="1" shape-rendering="crispEdges"/>
<path d="M1515 317.2H1526L1520.5 311.2Z" stroke="none" fill="#7a7a7a" stroke-width="1"/>
<rect x="1509.5" y="434.5" width="22" height="22.5" fill="#fff" stroke="#c6c6c6" stroke-width="1" shape-rendering="crispEdges"/>
<rect x="1509.5" y="476.5" width="22" height="21.5" fill="#fff" stroke="#b9b9b9" stroke-width="1" shape-rendering="crispEdges"/>
<path d="M1515 485.4H1526L1520.5 491Z" stroke="none" fill="#6a6a6a" stroke-width="1"/>
<rect x="2" y="497" width="1532" height="30.5" fill="#e6e6e6" shape-rendering="crispEdges"/>
<rect x="2" y="497" width="1532" height="1.7" fill="#c2c2c2"/>
<rect x="2" y="526.6" width="1532" height="1.6" fill="#c8c8c8"/>
<rect x="103.5" y="497" width="286" height="26" fill="#fff" shape-rendering="crispEdges"/>
<rect x="103" y="498.6" width="1" height="26" fill="#8f8f8f" shape-rendering="crispEdges"/>
<rect x="389" y="497" width="1" height="26" fill="#b4b4b4" shape-rendering="crispEdges"/>
<rect x="103" y="523" width="287" height="2" fill="#217346" shape-rendering="crispEdges"/>
<path d="M31.5 507.9V516.7L26.1 512.3Z" stroke="none" fill="#bebebe" stroke-width="1"/>
<path d="M56.8 507.9V516.7L62.2 512.3Z" stroke="none" fill="#bebebe" stroke-width="1"/>
<text x="113.69" y="516.90" font-family="Liberation Sans" font-size="18.4" fill="#217346" textLength="97.96" lengthAdjust="spacingAndGlyphs" font-weight="bold">whitehouse</text>
<text x="212.33" y="516.90" font-family="Liberation Sans" font-size="18.4" fill="#217346" textLength="6.96" lengthAdjust="spacingAndGlyphs" font-weight="bold">_</text>
<text x="221.08" y="516.90" font-family="Liberation Sans" font-size="18.4" fill="#217346" textLength="50.14" lengthAdjust="spacingAndGlyphs" font-weight="bold">waves</text>
<text x="272.15" y="516.90" font-family="Liberation Sans" font-size="18.4" fill="#217346" textLength="5.25" lengthAdjust="spacingAndGlyphs" font-weight="bold">-</text>
<text x="278.45" y="516.90" font-family="Liberation Sans" font-size="18.4" fill="#217346" textLength="40.95" lengthAdjust="spacingAndGlyphs" font-weight="bold">2014</text>
<text x="320.63" y="516.90" font-family="Liberation Sans" font-size="18.4" fill="#217346" textLength="6.96" lengthAdjust="spacingAndGlyphs" font-weight="bold">_</text>
<text x="329.22" y="516.90" font-family="Liberation Sans" font-size="18.4" fill="#217346" textLength="50.16" lengthAdjust="spacingAndGlyphs" font-weight="bold">12.csv</text>
<circle cx="433.4" cy="512.9" r="8.2" fill="none" stroke="#7a7a7a" stroke-width="1.1"/>
<path d="M429 512.9H437.8 M433.4 508.5V517.3" stroke="#7a7a7a" fill="none" stroke-width="1.2"/>
<rect x="918.4" y="505.6" width="2.2" height="2.2" fill="#b2b2b2"/>
<rect x="918.4" y="511.2" width="2.2" height="2.2" fill="#b2b2b2"/>
<rect x="918.4" y="516.9" width="2.2" height="2.2" fill="#b2b2b2"/>
<rect x="957.5" y="501.5" width="529" height="22" fill="#dadada" shape-rendering="crispEdges"/>
<rect x="935.5" y="501.5" width="22" height="22" fill="#fff" stroke="#ababab" stroke-width="1" shape-rendering="crispEdges"/>
<path d="M949 507.3V517.9L943.2 512.6Z" stroke="none" fill="#6d6d6d" stroke-width="1"/>
<rect x="959.5" y="501.5" width="261.5" height="22" fill="#fff" stroke="#ababab" stroke-width="1" shape-rendering="crispEdges"/>
<rect x="1485.5" y="501.5" width="22" height="22" fill="#fff" stroke="#ababab" stroke-width="1" shape-rendering="crispEdges"/>
<path d="M1494 507.5V517.7L1500 512.6Z" stroke="none" fill="#6d6d6d" stroke-width="1"/>
<g filter="url(#nf)">
<rect x="1101.5" y="528.5" width="55.5" height="29.5" fill="#cdcbc9" shape-rendering="crispEdges"/>
<path d="M1119.6 534.4H1136.6V551.2H1119.6Z M1119.6 540H1136.6 M1119.6 545.6H1136.6 M1125.3 534.4V551.2 M1131 534.4V551.2" stroke="#5a5a5a" fill="none" stroke-width="1.6"/>
<path d="M1175.2 534H1194V551.2H1175.2Z" stroke="#5a5a5a" fill="none" stroke-width="1.5"/>
<path d="M1179.2 537.8H1190V547.4H1179.2Z M1181.6 540.4H1187.6 M1181.6 542.6H1187.6 M1181.6 544.8H1187.6" stroke="#5a5a5a" fill="none" stroke-width="1.1"/>
<path d="M1231.6 534H1249.8V551.2H1231.6Z M1231.6 543.6H1243.2V534 M1237.4 534V543.6" stroke="#5a5a5a" fill="none" stroke-width="1.5"/>
<line x1="1277.8" y1="542.5" x2="1288.2" y2="542.5" stroke="#6a6a6a" stroke-width="1.2" shape-rendering="crispEdges"/>
<line x1="1297" y1="542.5" x2="1435.2" y2="542.5" stroke="#a6a6a6" stroke-width="1" shape-rendering="crispEdges"/>
<rect x="1362.5" y="535.8" width="7.5" height="15.2" fill="#737373" shape-rendering="crispEdges"/>
<path d="M1442.8 542.5H1454 M1448.4 536.9V548.1" stroke="#6a6a6a" fill="none" stroke-width="1.2"/>
<text x="1472.24" y="548.90" font-family="Liberation Sans" font-size="15" fill="#5a5a5a" textLength="36.12" lengthAdjust="spacingAndGlyphs">100%</text>
</g>
</svg>
</body></html>
